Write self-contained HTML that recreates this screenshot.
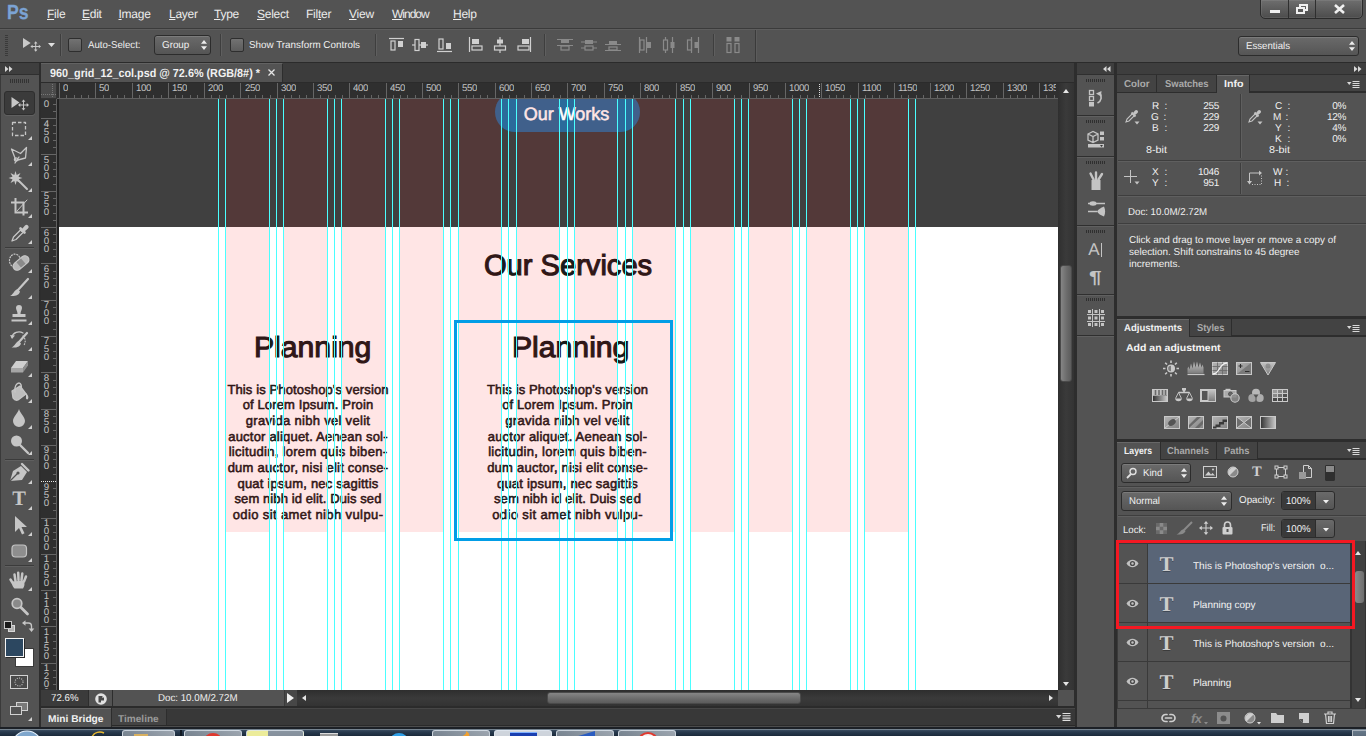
<!DOCTYPE html><html><head><meta charset="utf-8"><title>Photoshop</title><style>
html,body{margin:0;padding:0}
body{width:1366px;height:736px;overflow:hidden;background:#535353;position:relative;text-rendering:geometricPrecision;font-family:"Liberation Sans",sans-serif;font-size:11px;color:#ececec}
div{position:absolute;box-sizing:border-box}
.t{white-space:nowrap;line-height:1}
svg{position:absolute;overflow:visible}
u{text-decoration:underline;text-underline-offset:1px}
.dd{background:linear-gradient(#6a6a6a,#555);border:1px solid #2c2c2c;border-radius:3px;box-shadow:inset 0 1px 0 rgba(255,255,255,.12)}
.tab{background:#535353;border-right:1px solid #2d2d2d;color:#ececec;font-weight:bold}
.itab{background:#434343;border-right:1px solid #2d2d2d;color:#a6a6a6;font-weight:bold}
</style></head><body>
<div style="left:0px;top:0px;width:1366px;height:28px;background:#535353"></div>
<div class="t" style="left:7px;top:2.5px;font-size:20.5px;font-weight:bold;color:#7ba3d4;-webkit-text-stroke:0.3px #7ba3d4;transform:scaleX(.86);transform-origin:0 0">Ps</div>
<div class="t" style="left:47px;top:8px;font-size:12px;color:#ececec;letter-spacing:-0.25px"><u>F</u>ile</div>
<div class="t" style="left:82px;top:8px;font-size:12px;color:#ececec;letter-spacing:-0.25px"><u>E</u>dit</div>
<div class="t" style="left:118.5px;top:8px;font-size:12px;color:#ececec;letter-spacing:-0.25px"><u>I</u>mage</div>
<div class="t" style="left:169px;top:8px;font-size:12px;color:#ececec;letter-spacing:-0.25px"><u>L</u>ayer</div>
<div class="t" style="left:214px;top:8px;font-size:12px;color:#ececec;letter-spacing:-0.25px"><u>T</u>ype</div>
<div class="t" style="left:257px;top:8px;font-size:12px;color:#ececec;letter-spacing:-0.25px"><u>S</u>elect</div>
<div class="t" style="left:306px;top:8px;font-size:12px;color:#ececec;letter-spacing:-0.25px">Fil<u>t</u>er</div>
<div class="t" style="left:349px;top:8px;font-size:12px;color:#ececec;letter-spacing:-0.25px"><u>V</u>iew</div>
<div class="t" style="left:392px;top:8px;font-size:12px;color:#ececec;letter-spacing:-1.0px"><u>W</u>indow</div>
<div class="t" style="left:453px;top:8px;font-size:12px;color:#ececec;letter-spacing:-0.25px"><u>H</u>elp</div>
<div style="left:1260px;top:-1px;width:103px;height:20px;background:linear-gradient(#6e6e6e,#4c4c4c);border:1px solid #2b2b2b;border-radius:0 0 5px 5px;box-shadow:inset 0 0 0 1px rgba(255,255,255,.08)"></div>
<div style="left:1288px;top:0px;width:1px;height:18px;background:#2f2f2f"></div>
<div style="left:1315px;top:0px;width:1px;height:18px;background:#2f2f2f"></div>
<div style="left:1270px;top:10px;width:10px;height:3px;background:#f0f0f0"></div>
<div style="left:1299px;top:4px;width:9px;height:7px;border:2px solid #f0f0f0"></div>
<div style="left:1296px;top:7px;width:9px;height:7px;border:2px solid #f0f0f0;background:#5a5a5a"></div>
<svg style="left:1334px;top:4px" width="11" height="10" viewBox="0 0 11 10"><path d="M1 1 L10 9 M10 1 L1 9" stroke="#f0f0f0" stroke-width="2.6"/></svg>
<div style="left:0px;top:28px;width:1366px;height:1px;background:#3b3b3b"></div>
<div style="left:0px;top:29px;width:1366px;height:1px;background:#5e5e5e"></div>
<div style="left:0px;top:30px;width:1366px;height:32px;background:#535353"></div>
<div style="left:0px;top:62px;width:1366px;height:1px;background:#2b2b2b"></div>
<div style="left:5px;top:35px;width:3px;height:21px;background:repeating-linear-gradient(#3a3a3a 0 1px,#535353 1px 2px)"></div>
<svg style="left:23px;top:37px" width="18" height="17" viewBox="0 0 18 17"><path d="M0 1 L0 11 L7.700 6 Z" fill="#c9c9c9"/><path d="M12.700 5.500 v8 M8.700 9.500 h8" stroke="#c9c9c9" stroke-width="1" fill="none"/><path d="M12.700 4.200 l-1.800 2.200 h3.600 z M12.700 14.800 l-1.800 -2.200 h3.600 z M7.400 9.500 l2.200 -1.800 v3.600 z M18 9.500 l-2.200 -1.800 v3.600 z" fill="#c9c9c9"/></svg>
<svg style="left:48px;top:43px" width="7" height="4"><path d="M0 0 h7 l-3.500 4 z" fill="#e0e0e0"/></svg>
<div style="left:60px;top:34px;width:1px;height:22px;background:#3e3e3e"></div>
<div style="left:61px;top:34px;width:1px;height:22px;background:#5f5f5f"></div>
<div style="left:68px;top:38px;width:14px;height:14px;background:linear-gradient(#727272,#5c5c5c);border:1px solid #2e2e2e;border-radius:2px"></div>
<div class="t" style="left:87.5px;top:41.1px;font-size:10px;color:#f0f0f0;transform:scaleX(0.9638);transform-origin:0 0;">Auto-Select:</div>
<div class="dd" style="left:154px;top:35px;width:57px;height:20px;"></div>
<div class="t" style="left:162px;top:41.1px;font-size:10px;color:#f0f0f0;transform:scaleX(0.9823);transform-origin:0 0;">Group</div>
<svg style="left:200.500px;top:40px" width="6" height="10"><path d="M0 3.700 l3 -3.700 l3 3.700 z M0 6.300 l3 3.700 l3 -3.700 z" fill="#ececec"/></svg>
<div style="left:220px;top:34px;width:1px;height:22px;background:#3e3e3e"></div>
<div style="left:221px;top:34px;width:1px;height:22px;background:#5f5f5f"></div>
<div style="left:230px;top:38px;width:14px;height:14px;background:linear-gradient(#727272,#5c5c5c);border:1px solid #2e2e2e;border-radius:2px"></div>
<div class="t" style="left:249px;top:41.1px;font-size:10px;color:#f0f0f0;transform:scaleX(0.9839);transform-origin:0 0;">Show Transform Controls</div>
<div style="left:375px;top:34px;width:1px;height:22px;background:#3e3e3e"></div>
<div style="left:376px;top:34px;width:1px;height:22px;background:#5f5f5f"></div>
<svg style="left:389px;top:37px" width="16" height="16" viewBox="0 0 16 16" fill="none" stroke="#d0d0d0" stroke-width="1.2"><path d="M0 1.5 h15"/><rect x="2" y="4" width="4" height="9"/><rect x="9" y="4" width="5" height="6" fill="#d0d0d0" stroke="none"/></svg>
<svg style="left:412px;top:37px" width="16" height="16" viewBox="0 0 16 16" fill="none" stroke="#d0d0d0" stroke-width="1.2"><path d="M0 8 h16"/><rect x="3" y="2.500" width="4" height="11" fill="#535353"/><rect x="9" y="5" width="5" height="6" fill="#d0d0d0" stroke="none"/></svg>
<svg style="left:437px;top:37px" width="16" height="16" viewBox="0 0 16 16" fill="none" stroke="#d0d0d0" stroke-width="1.2"><path d="M0 14.5 h15"/><rect x="2" y="2" width="4" height="10"/><rect x="9" y="6" width="5" height="6" fill="#d0d0d0" stroke="none"/></svg>
<svg style="left:468px;top:37px" width="16" height="16" viewBox="0 0 16 16" fill="none" stroke="#d0d0d0" stroke-width="1.2"><path d="M1.5 0 v15"/><rect x="4" y="2" width="7" height="5" fill="#d0d0d0" stroke="none"/><rect x="4" y="9" width="10" height="4"/></svg>
<svg style="left:492px;top:37px" width="16" height="16" viewBox="0 0 16 16" fill="none" stroke="#d0d0d0" stroke-width="1.2"><path d="M8 0 v16"/><rect x="5" y="2.500" width="6" height="4" fill="#d0d0d0" stroke="none"/><rect x="2.500" y="9" width="11" height="4" fill="#535353"/></svg>
<svg style="left:516px;top:37px" width="16" height="16" viewBox="0 0 16 16" fill="none" stroke="#d0d0d0" stroke-width="1.2"><path d="M14.5 0 v15"/><rect x="6" y="2" width="7" height="5" fill="#d0d0d0" stroke="none"/><rect x="2" y="9" width="11" height="4"/></svg>
<div style="left:544px;top:34px;width:1px;height:22px;background:#3e3e3e"></div>
<div style="left:545px;top:34px;width:1px;height:22px;background:#5f5f5f"></div>
<svg style="left:557px;top:37px" width="16" height="16" viewBox="0 0 16 16" fill="none" stroke="#8a8a8a" stroke-width="1.2"><path d="M0 2.500 h16 M0 8.500 h16"/><rect x="4" y="3" width="8" height="3" fill="#8a8a8a" stroke="none"/><rect x="4" y="9" width="8" height="4"/></svg>
<svg style="left:581px;top:37px" width="16" height="16" viewBox="0 0 16 16" fill="none" stroke="#8a8a8a" stroke-width="1.2"><path d="M0 5 h16 M0 11 h16"/><rect x="4" y="3" width="8" height="4" fill="#8a8a8a" stroke="none"/><rect x="4" y="9" width="8" height="4" fill="#535353"/></svg>
<svg style="left:605px;top:37px" width="16" height="16" viewBox="0 0 16 16" fill="none" stroke="#8a8a8a" stroke-width="1.2"><path d="M0 7.500 h16 M0 13.500 h16"/><rect x="4" y="4" width="8" height="3" fill="#8a8a8a" stroke="none"/><rect x="4" y="10" width="8" height="3"/></svg>
<svg style="left:637px;top:37px" width="16" height="16" viewBox="0 0 16 16" fill="none" stroke="#8a8a8a" stroke-width="1.2"><path d="M2.500 0 v16 M9.500 0 v16"/><rect x="3" y="3" width="4" height="10"/><rect x="10" y="5" width="4" height="6" fill="#8a8a8a" stroke="none"/></svg>
<svg style="left:661px;top:37px" width="16" height="16" viewBox="0 0 16 16" fill="none" stroke="#8a8a8a" stroke-width="1.2"><path d="M4.500 0 v16 M11.500 0 v16"/><rect x="2.500" y="3" width="4" height="10" fill="#535353"/><rect x="9.500" y="5" width="4" height="6" fill="#8a8a8a" stroke="none"/></svg>
<svg style="left:685px;top:37px" width="16" height="16" viewBox="0 0 16 16" fill="none" stroke="#8a8a8a" stroke-width="1.2"><path d="M6.500 0 v16 M13.500 0 v16"/><rect x="2.500" y="3" width="4" height="10"/><rect x="9.500" y="5" width="4" height="6" fill="#8a8a8a" stroke="none"/></svg>
<div style="left:713px;top:34px;width:1px;height:22px;background:#3e3e3e"></div>
<div style="left:714px;top:34px;width:1px;height:22px;background:#5f5f5f"></div>
<svg style="left:725px;top:37px" width="16" height="16" viewBox="0 0 16 16" fill="none" stroke="#8a8a8a" stroke-width="1.2"><rect x="2" y="6.500" width="4" height="9"/><rect x="10" y="6.500" width="4" height="9"/><rect x="1.500" y="0" width="5" height="4.500" fill="#8a8a8a" stroke="none"/><rect x="9.500" y="0" width="5" height="4.500" fill="#8a8a8a" stroke="none"/></svg>
<div style="left:755px;top:30px;width:1px;height:32px;background:#3a3a3a"></div>
<div style="left:756px;top:30px;width:1px;height:32px;background:#5c5c5c"></div>
<div class="dd" style="left:1238px;top:36px;width:121px;height:20px;"></div>
<div class="t" style="left:1246px;top:41.6px;font-size:10px;color:#f0f0f0;transform:scaleX(0.9654);transform-origin:0 0;">Essentials</div>
<svg style="left:1349px;top:41px" width="6" height="11"><path d="M0 3.700 l3 -3.700 l3 3.700 z M0 6.300 l3 3.700 l3 -3.700 z" fill="#ececec"/></svg>
<div style="left:0px;top:63px;width:1366px;height:20px;background:#3c3c3c"></div>
<div style="left:39px;top:63px;width:2px;height:664px;background:#2d2d2d"></div>
<div style="left:41px;top:63px;width:242px;height:19px;background:#535353;border-top:1px solid #626262;border-right:1px solid #2d2d2d"></div>
<div class="t" style="left:50.3px;top:67.6px;font-size:11.8px;font-weight:bold;color:#f0f0f0;transform:scaleX(0.916);transform-origin:0 0;">960_grid_12_col.psd @ 72.6% (RGB/8#) *</div>
<svg style="left:268px;top:69px" width="7" height="7"><path d="M0.500 .5 L6.500 6.500 M6.500 .5 L.5 6.500" stroke="#e6e6e6" stroke-width="1.3"/></svg>
<div style="left:41px;top:82px;width:1034px;height:1px;background:#2b2b2b"></div>
<div style="left:41px;top:83px;width:1017px;height:16px;background:#2f2f2f;border-bottom:1px solid #606060"></div>
<div style="left:41px;top:83px;width:16px;height:16px;background:#4b4b4b;border-right:1px solid #333;border-bottom:1px solid #333"></div>
<div style="left:41px;top:94px;width:15px;height:1px;background:repeating-linear-gradient(90deg,#777 0 1px,transparent 1px 2px)"></div>
<div style="left:52px;top:84px;width:1px;height:14px;background:repeating-linear-gradient(#777 0 1px,transparent 1px 2px)"></div>
<svg style="left:57px;top:83px" width="1001" height="15" viewBox="57 83 1001 15"><g stroke="#666" stroke-width="1" shape-rendering="crispEdges"><path d="M59.5 83 v15"/><path d="M66.5 95 v3"/><path d="M74.5 95 v3"/><path d="M81.5 95 v3"/><path d="M88.5 95 v3"/><path d="M95.5 83 v15"/><path d="M103.5 95 v3"/><path d="M110.5 95 v3"/><path d="M117.5 95 v3"/><path d="M124.5 95 v3"/><path d="M132.5 83 v15"/><path d="M139.5 95 v3"/><path d="M146.5 95 v3"/><path d="M153.5 95 v3"/><path d="M161.5 95 v3"/><path d="M168.5 83 v15"/><path d="M175.5 95 v3"/><path d="M182.5 95 v3"/><path d="M190.5 95 v3"/><path d="M197.5 95 v3"/><path d="M204.5 83 v15"/><path d="M211.5 95 v3"/><path d="M219.5 95 v3"/><path d="M226.5 95 v3"/><path d="M233.5 95 v3"/><path d="M240.5 83 v15"/><path d="M248.5 95 v3"/><path d="M255.5 95 v3"/><path d="M262.5 95 v3"/><path d="M270.5 95 v3"/><path d="M277.5 83 v15"/><path d="M284.5 95 v3"/><path d="M291.5 95 v3"/><path d="M299.5 95 v3"/><path d="M306.5 95 v3"/><path d="M313.5 83 v15"/><path d="M320.5 95 v3"/><path d="M328.5 95 v3"/><path d="M335.5 95 v3"/><path d="M342.5 95 v3"/><path d="M349.5 83 v15"/><path d="M357.5 95 v3"/><path d="M364.5 95 v3"/><path d="M371.5 95 v3"/><path d="M378.5 95 v3"/><path d="M386.5 83 v15"/><path d="M393.5 95 v3"/><path d="M400.5 95 v3"/><path d="M407.5 95 v3"/><path d="M415.5 95 v3"/><path d="M422.5 83 v15"/><path d="M429.5 95 v3"/><path d="M437.5 95 v3"/><path d="M444.5 95 v3"/><path d="M451.5 95 v3"/><path d="M458.5 83 v15"/><path d="M466.5 95 v3"/><path d="M473.5 95 v3"/><path d="M480.5 95 v3"/><path d="M487.5 95 v3"/><path d="M495.5 83 v15"/><path d="M502.5 95 v3"/><path d="M509.5 95 v3"/><path d="M516.5 95 v3"/><path d="M524.5 95 v3"/><path d="M531.5 83 v15"/><path d="M538.5 95 v3"/><path d="M545.5 95 v3"/><path d="M553.5 95 v3"/><path d="M560.5 95 v3"/><path d="M567.5 83 v15"/><path d="M574.5 95 v3"/><path d="M582.5 95 v3"/><path d="M589.5 95 v3"/><path d="M596.5 95 v3"/><path d="M604.5 83 v15"/><path d="M611.5 95 v3"/><path d="M618.5 95 v3"/><path d="M625.5 95 v3"/><path d="M633.5 95 v3"/><path d="M640.5 83 v15"/><path d="M647.5 95 v3"/><path d="M654.5 95 v3"/><path d="M662.5 95 v3"/><path d="M669.5 95 v3"/><path d="M676.5 83 v15"/><path d="M683.5 95 v3"/><path d="M691.5 95 v3"/><path d="M698.5 95 v3"/><path d="M705.5 95 v3"/><path d="M712.5 83 v15"/><path d="M720.5 95 v3"/><path d="M727.5 95 v3"/><path d="M734.5 95 v3"/><path d="M741.5 95 v3"/><path d="M749.5 83 v15"/><path d="M756.5 95 v3"/><path d="M763.5 95 v3"/><path d="M770.5 95 v3"/><path d="M778.5 95 v3"/><path d="M785.5 83 v15"/><path d="M792.5 95 v3"/><path d="M800.5 95 v3"/><path d="M807.5 95 v3"/><path d="M814.5 95 v3"/><path d="M821.5 83 v15"/><path d="M829.5 95 v3"/><path d="M836.5 95 v3"/><path d="M843.5 95 v3"/><path d="M850.5 95 v3"/><path d="M858.5 83 v15"/><path d="M865.5 95 v3"/><path d="M872.5 95 v3"/><path d="M879.5 95 v3"/><path d="M887.5 95 v3"/><path d="M894.5 83 v15"/><path d="M901.5 95 v3"/><path d="M908.5 95 v3"/><path d="M916.5 95 v3"/><path d="M923.5 95 v3"/><path d="M930.5 83 v15"/><path d="M937.5 95 v3"/><path d="M945.5 95 v3"/><path d="M952.5 95 v3"/><path d="M959.5 95 v3"/><path d="M966.5 83 v15"/><path d="M974.5 95 v3"/><path d="M981.5 95 v3"/><path d="M988.5 95 v3"/><path d="M996.5 95 v3"/><path d="M1003.5 83 v15"/><path d="M1010.5 95 v3"/><path d="M1017.5 95 v3"/><path d="M1025.5 95 v3"/><path d="M1032.5 95 v3"/><path d="M1039.5 83 v15"/><path d="M1046.5 95 v3"/><path d="M1054.5 95 v3"/></g></svg>
<div class="t" style="left:63px;top:84.3px;font-size:9.7px;color:#c2c2c2;letter-spacing:-0.4px;max-width:993px;overflow:hidden">0</div>
<div class="t" style="left:99px;top:84.3px;font-size:9.7px;color:#c2c2c2;letter-spacing:-0.4px;max-width:957px;overflow:hidden">50</div>
<div class="t" style="left:136px;top:84.3px;font-size:9.7px;color:#c2c2c2;letter-spacing:-0.4px;max-width:921px;overflow:hidden">100</div>
<div class="t" style="left:172px;top:84.3px;font-size:9.7px;color:#c2c2c2;letter-spacing:-0.4px;max-width:885px;overflow:hidden">150</div>
<div class="t" style="left:208px;top:84.3px;font-size:9.7px;color:#c2c2c2;letter-spacing:-0.4px;max-width:848px;overflow:hidden">200</div>
<div class="t" style="left:245px;top:84.3px;font-size:9.7px;color:#c2c2c2;letter-spacing:-0.4px;max-width:812px;overflow:hidden">250</div>
<div class="t" style="left:281px;top:84.3px;font-size:9.7px;color:#c2c2c2;letter-spacing:-0.4px;max-width:776px;overflow:hidden">300</div>
<div class="t" style="left:317px;top:84.3px;font-size:9.7px;color:#c2c2c2;letter-spacing:-0.4px;max-width:739px;overflow:hidden">350</div>
<div class="t" style="left:353px;top:84.3px;font-size:9.7px;color:#c2c2c2;letter-spacing:-0.4px;max-width:703px;overflow:hidden">400</div>
<div class="t" style="left:390px;top:84.3px;font-size:9.7px;color:#c2c2c2;letter-spacing:-0.4px;max-width:667px;overflow:hidden">450</div>
<div class="t" style="left:426px;top:84.3px;font-size:9.7px;color:#c2c2c2;letter-spacing:-0.4px;max-width:631px;overflow:hidden">500</div>
<div class="t" style="left:462px;top:84.3px;font-size:9.7px;color:#c2c2c2;letter-spacing:-0.4px;max-width:594px;overflow:hidden">550</div>
<div class="t" style="left:499px;top:84.3px;font-size:9.7px;color:#c2c2c2;letter-spacing:-0.4px;max-width:558px;overflow:hidden">600</div>
<div class="t" style="left:535px;top:84.3px;font-size:9.7px;color:#c2c2c2;letter-spacing:-0.4px;max-width:522px;overflow:hidden">650</div>
<div class="t" style="left:571px;top:84.3px;font-size:9.7px;color:#c2c2c2;letter-spacing:-0.4px;max-width:485px;overflow:hidden">700</div>
<div class="t" style="left:608px;top:84.3px;font-size:9.7px;color:#c2c2c2;letter-spacing:-0.4px;max-width:449px;overflow:hidden">750</div>
<div class="t" style="left:644px;top:84.3px;font-size:9.7px;color:#c2c2c2;letter-spacing:-0.4px;max-width:413px;overflow:hidden">800</div>
<div class="t" style="left:680px;top:84.3px;font-size:9.7px;color:#c2c2c2;letter-spacing:-0.4px;max-width:376px;overflow:hidden">850</div>
<div class="t" style="left:716px;top:84.3px;font-size:9.7px;color:#c2c2c2;letter-spacing:-0.4px;max-width:340px;overflow:hidden">900</div>
<div class="t" style="left:753px;top:84.3px;font-size:9.7px;color:#c2c2c2;letter-spacing:-0.4px;max-width:304px;overflow:hidden">950</div>
<div class="t" style="left:789px;top:84.3px;font-size:9.7px;color:#c2c2c2;letter-spacing:-0.4px;max-width:267px;overflow:hidden">1000</div>
<div class="t" style="left:825px;top:84.3px;font-size:9.7px;color:#c2c2c2;letter-spacing:-0.4px;max-width:231px;overflow:hidden">1050</div>
<div class="t" style="left:862px;top:84.3px;font-size:9.7px;color:#c2c2c2;letter-spacing:-0.4px;max-width:195px;overflow:hidden">1100</div>
<div class="t" style="left:898px;top:84.3px;font-size:9.7px;color:#c2c2c2;letter-spacing:-0.4px;max-width:159px;overflow:hidden">1150</div>
<div class="t" style="left:934px;top:84.3px;font-size:9.7px;color:#c2c2c2;letter-spacing:-0.4px;max-width:122px;overflow:hidden">1200</div>
<div class="t" style="left:970px;top:84.3px;font-size:9.7px;color:#c2c2c2;letter-spacing:-0.4px;max-width:86px;overflow:hidden">1250</div>
<div class="t" style="left:1007px;top:84.3px;font-size:9.7px;color:#c2c2c2;letter-spacing:-0.4px;max-width:50px;overflow:hidden">1300</div>
<div class="t" style="left:1043px;top:84.3px;font-size:9.7px;color:#c2c2c2;letter-spacing:-0.4px;max-width:13px;overflow:hidden">1350</div>
<div style="left:819px;top:84px;width:1px;height:14px;background:repeating-linear-gradient(#ddd 0 1px,transparent 1px 2px)"></div>
<div style="left:41px;top:99px;width:16px;height:591px;background:#2f2f2f;border-right:1px solid #606060"></div>
<svg style="left:41px;top:99px" width="16" height="591" viewBox="41 99 16 591"><g stroke="#666" stroke-width="1" shape-rendering="crispEdges"><path d="M53 104.5 h3"/><path d="M53 111.5 h3"/><path d="M41 118.5 h15"/><path d="M53 125.5 h3"/><path d="M53 133.5 h3"/><path d="M53 140.5 h3"/><path d="M53 147.5 h3"/><path d="M41 154.5 h15"/><path d="M53 162.5 h3"/><path d="M53 169.5 h3"/><path d="M53 176.5 h3"/><path d="M53 184.5 h3"/><path d="M41 191.5 h15"/><path d="M53 198.5 h3"/><path d="M53 205.5 h3"/><path d="M53 213.5 h3"/><path d="M53 220.5 h3"/><path d="M41 227.5 h15"/><path d="M53 234.5 h3"/><path d="M53 242.5 h3"/><path d="M53 249.5 h3"/><path d="M53 256.5 h3"/><path d="M41 263.5 h15"/><path d="M53 271.5 h3"/><path d="M53 278.5 h3"/><path d="M53 285.5 h3"/><path d="M53 292.5 h3"/><path d="M41 300.5 h15"/><path d="M53 307.5 h3"/><path d="M53 314.5 h3"/><path d="M53 321.5 h3"/><path d="M53 329.5 h3"/><path d="M41 336.5 h15"/><path d="M53 343.5 h3"/><path d="M53 351.5 h3"/><path d="M53 358.5 h3"/><path d="M53 365.5 h3"/><path d="M41 372.5 h15"/><path d="M53 380.5 h3"/><path d="M53 387.5 h3"/><path d="M53 394.5 h3"/><path d="M53 401.5 h3"/><path d="M41 409.5 h15"/><path d="M53 416.5 h3"/><path d="M53 423.5 h3"/><path d="M53 430.5 h3"/><path d="M53 438.5 h3"/><path d="M41 445.5 h15"/><path d="M53 452.5 h3"/><path d="M53 459.5 h3"/><path d="M53 467.5 h3"/><path d="M53 474.5 h3"/><path d="M41 481.5 h15"/><path d="M53 488.5 h3"/><path d="M53 496.5 h3"/><path d="M53 503.5 h3"/><path d="M53 510.5 h3"/><path d="M41 518.5 h15"/><path d="M53 525.5 h3"/><path d="M53 532.5 h3"/><path d="M53 539.5 h3"/><path d="M53 547.5 h3"/><path d="M41 554.5 h15"/><path d="M53 561.5 h3"/><path d="M53 568.5 h3"/><path d="M53 576.5 h3"/><path d="M53 583.5 h3"/><path d="M41 590.5 h15"/><path d="M53 597.5 h3"/><path d="M53 605.5 h3"/><path d="M53 612.5 h3"/><path d="M53 619.5 h3"/><path d="M41 626.5 h15"/><path d="M53 634.5 h3"/><path d="M53 641.5 h3"/><path d="M53 648.5 h3"/><path d="M53 655.5 h3"/><path d="M41 663.5 h15"/><path d="M53 670.5 h3"/><path d="M53 677.5 h3"/><path d="M53 684.5 h3"/></g></svg>
<div style="left:42px;top:97.5px;padding-top:3px;width:9px;text-align:center;font-size:9.7px;line-height:8px;color:#c2c2c2;height:591.5px;overflow:hidden">0</div>
<div style="left:42px;top:118px;padding-top:3px;width:9px;text-align:center;font-size:9.7px;line-height:8px;color:#c2c2c2;height:571px;overflow:hidden">4<br>5<br>0</div>
<div style="left:42px;top:154px;padding-top:3px;width:9px;text-align:center;font-size:9.7px;line-height:8px;color:#c2c2c2;height:535px;overflow:hidden">5<br>0<br>0</div>
<div style="left:42px;top:190px;padding-top:3px;width:9px;text-align:center;font-size:9.7px;line-height:8px;color:#c2c2c2;height:499px;overflow:hidden">5<br>5<br>0</div>
<div style="left:42px;top:227px;padding-top:3px;width:9px;text-align:center;font-size:9.7px;line-height:8px;color:#c2c2c2;height:462px;overflow:hidden">6<br>0<br>0</div>
<div style="left:42px;top:263px;padding-top:3px;width:9px;text-align:center;font-size:9.7px;line-height:8px;color:#c2c2c2;height:426px;overflow:hidden">6<br>5<br>0</div>
<div style="left:42px;top:299px;padding-top:3px;width:9px;text-align:center;font-size:9.7px;line-height:8px;color:#c2c2c2;height:390px;overflow:hidden">7<br>0<br>0</div>
<div style="left:42px;top:335px;padding-top:3px;width:9px;text-align:center;font-size:9.7px;line-height:8px;color:#c2c2c2;height:354px;overflow:hidden">7<br>5<br>0</div>
<div style="left:42px;top:372px;padding-top:3px;width:9px;text-align:center;font-size:9.7px;line-height:8px;color:#c2c2c2;height:317px;overflow:hidden">8<br>0<br>0</div>
<div style="left:42px;top:408px;padding-top:3px;width:9px;text-align:center;font-size:9.7px;line-height:8px;color:#c2c2c2;height:281px;overflow:hidden">8<br>5<br>0</div>
<div style="left:42px;top:444px;padding-top:3px;width:9px;text-align:center;font-size:9.7px;line-height:8px;color:#c2c2c2;height:245px;overflow:hidden">9<br>0<br>0</div>
<div style="left:42px;top:481px;padding-top:3px;width:9px;text-align:center;font-size:9.7px;line-height:8px;color:#c2c2c2;height:208px;overflow:hidden">9<br>5<br>0</div>
<div style="left:42px;top:517px;padding-top:3px;width:9px;text-align:center;font-size:9.7px;line-height:8px;color:#c2c2c2;height:172px;overflow:hidden">1<br>0<br>0<br>0</div>
<div style="left:42px;top:553px;padding-top:3px;width:9px;text-align:center;font-size:9.7px;line-height:8px;color:#c2c2c2;height:136px;overflow:hidden">1<br>0<br>5<br>0</div>
<div style="left:42px;top:590px;padding-top:3px;width:9px;text-align:center;font-size:9.7px;line-height:8px;color:#c2c2c2;height:99px;overflow:hidden">1<br>1<br>0<br>0</div>
<div style="left:42px;top:626px;padding-top:3px;width:9px;text-align:center;font-size:9.7px;line-height:8px;color:#c2c2c2;height:63px;overflow:hidden">1<br>1<br>5<br>0</div>
<div style="left:42px;top:662px;padding-top:3px;width:9px;text-align:center;font-size:9.7px;line-height:8px;color:#c2c2c2;height:27px;overflow:hidden">1<br>2<br>0<br>0</div>
<div style="left:41px;top:481px;width:15px;height:1px;background:repeating-linear-gradient(90deg,#e6e6e6 0 1px,#2f2f2f 1px 2px)"></div>
<div style="left:57px;top:99px;width:1001px;height:591px;overflow:hidden;background:#fff;border-left:1px solid #222">
<div style="left:0px;top:0px;width:1000px;height:128px;background:#404040"></div>
<div style="left:0px;top:0px;width:1px;height:591px;background:#222"></div>
<div style="left:437px;top:-7px;width:145px;height:39.8px;background:#2b6b9b;border-radius:19.900px"></div>
<div class="t" style="left:436px;top:6px;width:145px;text-align:center;font-size:18px;color:#fff;-webkit-text-stroke:0.55px #fff"><span id="ow" style="display:inline-block;transform:scaleX(1)">Our Works</span></div>
<div class="t" id="os" style="left:425.5px;top:153px;font-size:29px;color:#181a1a;-webkit-text-stroke:1.1px #181a1a;transform:scaleX(1.003);transform-origin:0 0">Our Services</div>
<div class="t" id="pl1" style="left:195.5px;top:234.5px;font-size:29px;color:#181a1a;-webkit-text-stroke:1.1px #181a1a;transform:scaleX(1.04);transform-origin:0 0">Planning</div>
<div class="t" id="pl2" style="left:454.20000000000005px;top:234.5px;font-size:29px;color:#181a1a;-webkit-text-stroke:1.1px #181a1a;transform:scaleX(1.04);transform-origin:0 0">Planning</div>
<div id="bd0" style="left:150px;top:282.8px;width:200px;text-align:center;font-size:13px;line-height:15.62px;color:#181a1a;-webkit-text-stroke:0.55px #181a1a;white-space:nowrap"><span style="letter-spacing:0.125px">This is Photoshop's version</span><br><span style="letter-spacing:0.134px">of Lorem Ipsum. Proin</span><br><span style="letter-spacing:0.305px">gravida nibh vel velit</span><br><span style="letter-spacing:0.206px">auctor aliquet. Aenean sol-</span><br><span style="letter-spacing:0.3px">licitudin, lorem quis biben-</span><br><span style="letter-spacing:0.243px">dum auctor, nisi elit conse-</span><br><span style="letter-spacing:0.215px">quat ipsum, nec sagittis</span><br><span style="letter-spacing:0.096px">sem nibh id elit. Duis sed</span><br><span style="letter-spacing:0.392px">odio sit amet nibh vulpu-</span></div>
<div id="bd1" style="left:409.5px;top:282.8px;width:200px;text-align:center;font-size:13px;line-height:15.62px;color:#181a1a;-webkit-text-stroke:0.55px #181a1a;white-space:nowrap"><span style="letter-spacing:0.125px">This is Photoshop's version</span><br><span style="letter-spacing:0.134px">of Lorem Ipsum. Proin</span><br><span style="letter-spacing:0.305px">gravida nibh vel velit</span><br><span style="letter-spacing:0.206px">auctor aliquet. Aenean sol-</span><br><span style="letter-spacing:0.3px">licitudin, lorem quis biben-</span><br><span style="letter-spacing:0.243px">dum auctor, nisi elit conse-</span><br><span style="letter-spacing:0.215px">quat ipsum, nec sagittis</span><br><span style="letter-spacing:0.096px">sem nibh id elit. Duis sed</span><br><span style="letter-spacing:0.392px">odio sit amet nibh vulpu-</span></div>
<div style="left:168px;top:0px;width:43px;height:433px;background:rgba(255,0,0,.1)"></div>
<div style="left:226px;top:0px;width:43px;height:433px;background:rgba(255,0,0,.1)"></div>
<div style="left:284px;top:0px;width:43px;height:433px;background:rgba(255,0,0,.1)"></div>
<div style="left:342px;top:0px;width:43px;height:433px;background:rgba(255,0,0,.1)"></div>
<div style="left:401px;top:0px;width:42px;height:433px;background:rgba(255,0,0,.1)"></div>
<div style="left:459px;top:0px;width:42px;height:433px;background:rgba(255,0,0,.1)"></div>
<div style="left:517px;top:0px;width:42px;height:433px;background:rgba(255,0,0,.1)"></div>
<div style="left:575px;top:0px;width:42px;height:433px;background:rgba(255,0,0,.1)"></div>
<div style="left:633px;top:0px;width:43px;height:433px;background:rgba(255,0,0,.1)"></div>
<div style="left:691px;top:0px;width:43px;height:433px;background:rgba(255,0,0,.1)"></div>
<div style="left:749px;top:0px;width:43px;height:433px;background:rgba(255,0,0,.1)"></div>
<div style="left:807px;top:0px;width:43px;height:433px;background:rgba(255,0,0,.1)"></div>
<div style="left:160px;top:0px;width:1px;height:591px;background:#4affff"></div>
<div style="left:167px;top:0px;width:1px;height:591px;background:#4affff"></div>
<div style="left:211px;top:0px;width:1px;height:591px;background:#4affff"></div>
<div style="left:218px;top:0px;width:1px;height:591px;background:#4affff"></div>
<div style="left:225px;top:0px;width:1px;height:591px;background:#4affff"></div>
<div style="left:269px;top:0px;width:1px;height:591px;background:#4affff"></div>
<div style="left:276px;top:0px;width:1px;height:591px;background:#4affff"></div>
<div style="left:283px;top:0px;width:1px;height:591px;background:#4affff"></div>
<div style="left:327px;top:0px;width:1px;height:591px;background:#4affff"></div>
<div style="left:334px;top:0px;width:1px;height:591px;background:#4affff"></div>
<div style="left:341px;top:0px;width:1px;height:591px;background:#4affff"></div>
<div style="left:385px;top:0px;width:1px;height:591px;background:#4affff"></div>
<div style="left:392px;top:0px;width:1px;height:591px;background:#4affff"></div>
<div style="left:400px;top:0px;width:1px;height:591px;background:#4affff"></div>
<div style="left:443px;top:0px;width:1px;height:591px;background:#4affff"></div>
<div style="left:450px;top:0px;width:1px;height:591px;background:#4affff"></div>
<div style="left:458px;top:0px;width:1px;height:591px;background:#4affff"></div>
<div style="left:501px;top:0px;width:1px;height:591px;background:#4affff"></div>
<div style="left:509px;top:0px;width:1px;height:591px;background:#4affff"></div>
<div style="left:516px;top:0px;width:1px;height:591px;background:#4affff"></div>
<div style="left:559px;top:0px;width:1px;height:591px;background:#4affff"></div>
<div style="left:567px;top:0px;width:1px;height:591px;background:#4affff"></div>
<div style="left:574px;top:0px;width:1px;height:591px;background:#4affff"></div>
<div style="left:617px;top:0px;width:1px;height:591px;background:#4affff"></div>
<div style="left:625px;top:0px;width:1px;height:591px;background:#4affff"></div>
<div style="left:632px;top:0px;width:1px;height:591px;background:#4affff"></div>
<div style="left:676px;top:0px;width:1px;height:591px;background:#4affff"></div>
<div style="left:683px;top:0px;width:1px;height:591px;background:#4affff"></div>
<div style="left:690px;top:0px;width:1px;height:591px;background:#4affff"></div>
<div style="left:734px;top:0px;width:1px;height:591px;background:#4affff"></div>
<div style="left:741px;top:0px;width:1px;height:591px;background:#4affff"></div>
<div style="left:748px;top:0px;width:1px;height:591px;background:#4affff"></div>
<div style="left:792px;top:0px;width:1px;height:591px;background:#4affff"></div>
<div style="left:799px;top:0px;width:1px;height:591px;background:#4affff"></div>
<div style="left:806px;top:0px;width:1px;height:591px;background:#4affff"></div>
<div style="left:850px;top:0px;width:1px;height:591px;background:#4affff"></div>
<div style="left:857px;top:0px;width:1px;height:591px;background:#4affff"></div>
<div style="left:396px;top:221px;width:219px;height:221px;border:3px solid #029de6"></div>
</div>
<div style="left:1058px;top:83px;width:16px;height:607px;background:linear-gradient(90deg,#2f2f2f,#3a3a3a 50%,#333)"></div>
<svg style="left:1063px;top:88.500px" width="6" height="4"><path d="M0 4 l3 -4 l3 4 z" fill="#e6e6e6"/></svg>
<svg style="left:1063px;top:681.500px" width="6" height="4"><path d="M0 0 l3 4 l3 -4 z" fill="#e6e6e6"/></svg>
<div style="left:1060px;top:265px;width:12px;height:117px;background:linear-gradient(90deg,#858585,#6a6a6a 60%,#5c5c5c);border-radius:3px;border:1px solid #4a4a4a"></div>
<div style="left:1074px;top:63px;width:3px;height:664px;background:#2d2d2d"></div>
<div style="left:0px;top:63px;width:39px;height:664px;background:#535353;border-left:1px solid #3a3a3a"></div>
<div style="left:0px;top:63px;width:39px;height:12px;background:#3e3e3e;border-bottom:1px solid #2f2f2f"></div>
<svg style="left:5px;top:66px" width="8" height="6"><path d="M0 0 l3.500 3 l-3.500 3 z M4 0 l3.500 3 l-3.500 3 z" fill="#d8d8d8"/></svg>
<div style="left:10px;top:79px;width:19px;height:4px;background:repeating-linear-gradient(90deg,#333 0 1px,transparent 1px 2px)"></div>
<div style="left:4px;top:91px;width:31px;height:24px;background:#3b3b3b;border:1px solid #2e2e2e;border-radius:3px;box-shadow:0 1px 0 rgba(255,255,255,.08)"></div>
<svg style="left:7px;top:90.5px" width="24" height="24" viewBox="0 0 24 24" fill="none" stroke="#c6c6c6" stroke-width="1.3" stroke-linecap="round" stroke-linejoin="round"><path d="M4.500 6 v11 l8 -5.500 z" fill="#c6c6c6" stroke="none"/><path d="M16.500 10 v8 M12.500 14 h8" stroke-width="1"/><path d="M16.500 8.500 l-1.900 2.300 h3.800 z M16.500 19.500 l-1.900 -2.300 h3.800 z M11 14 l2.300 -1.900 v3.800 z M22 14 l-2.300 -1.900 v3.800 z" fill="#c6c6c6" stroke="none"/></svg>
<svg style="left:7px;top:116.5px" width="24" height="24" viewBox="0 0 24 24" fill="none" stroke="#c6c6c6" stroke-width="1.3" stroke-linecap="round" stroke-linejoin="round"><rect x="5.500" y="5.500" width="13" height="13" stroke-dasharray="3.500 2" stroke-linecap="butt"/></svg>
<svg style="left:28px;top:135.5px" width="4" height="4"><path d="M4 0 v4 h-4 z" fill="#d0d0d0"/></svg>
<svg style="left:7px;top:143px" width="24" height="24" viewBox="0 0 24 24" fill="none" stroke="#c6c6c6" stroke-width="1.3" stroke-linecap="round" stroke-linejoin="round"><path d="M4.500 6 l9 4.500 l6 -6 l-1 10.500 l-9.500 2.500 z M8 20 l4 -6"/><circle cx="9" cy="16.500" r="1.600"/></svg>
<svg style="left:28px;top:162px" width="4" height="4"><path d="M4 0 v4 h-4 z" fill="#d0d0d0"/></svg>
<svg style="left:7px;top:169px" width="24" height="24" viewBox="0 0 24 24" fill="none" stroke="#c6c6c6" stroke-width="1.3" stroke-linecap="round" stroke-linejoin="round"><path d="M9 9 L20 20" stroke-width="2"/><path d="M8.500 2 l1.200 4 l3.800 -2 l-2 3.800 l4 1.200 l-4 1.200 l2 3.800 l-3.800 -2 l-1.200 4 l-1.200 -4 l-3.800 2 l2 -3.800 l-4 -1.200 l4 -1.200 l-2 -3.800 l3.800 2 z" fill="#c6c6c6" stroke="none"/></svg>
<svg style="left:28px;top:188px" width="4" height="4"><path d="M4 0 v4 h-4 z" fill="#d0d0d0"/></svg>
<svg style="left:7px;top:195px" width="24" height="24" viewBox="0 0 24 24" fill="none" stroke="#c6c6c6" stroke-width="1.3" stroke-linecap="round" stroke-linejoin="round"><path d="M8.500 3 v14.500 h12.500 M4 7.500 h12.500 v13" stroke-width="2" stroke-linecap="butt" stroke-linejoin="miter"/><path d="M10 16 L20 5" stroke-width="1"/></svg>
<svg style="left:28px;top:214px" width="4" height="4"><path d="M4 0 v4 h-4 z" fill="#d0d0d0"/></svg>
<svg style="left:7px;top:221px" width="24" height="24" viewBox="0 0 24 24" fill="none" stroke="#c6c6c6" stroke-width="1.3" stroke-linecap="round" stroke-linejoin="round"><path d="M5 20 l1.500 -4 l7 -7 l2.500 2.500 l-7 7 z"/><path d="M13.500 7.500 l4 4" stroke-width="2.600"/><path d="M15 8 l3 -3.500 a2 2 0 0 1 3 3 l-3.500 3 z" fill="#c6c6c6" stroke="none"/></svg>
<svg style="left:28px;top:240px" width="4" height="4"><path d="M4 0 v4 h-4 z" fill="#d0d0d0"/></svg>
<div style="left:5px;top:247px;width:29px;height:1px;background:#3b3b3b"></div>
<div style="left:5px;top:248px;width:29px;height:1px;background:#5f5f5f"></div>
<svg style="left:7px;top:249.5px" width="24" height="24" viewBox="0 0 24 24" fill="none" stroke="#c6c6c6" stroke-width="1.3" stroke-linecap="round" stroke-linejoin="round"><g transform="rotate(-40 14 13)"><rect x="5" y="9" width="18" height="8" rx="4" fill="#b8b8b8" stroke="#c6c6c6"/><rect x="11" y="9.500" width="6" height="7" fill="#8a8a8a" stroke="none"/></g><path d="M7 17 a5.500 6.500 0 1 1 6 -9" stroke-dasharray="1 1.800" stroke-width="1.200"/></svg>
<svg style="left:28px;top:268.5px" width="4" height="4"><path d="M4 0 v4 h-4 z" fill="#d0d0d0"/></svg>
<svg style="left:7px;top:276px" width="24" height="24" viewBox="0 0 24 24" fill="none" stroke="#c6c6c6" stroke-width="1.3" stroke-linecap="round" stroke-linejoin="round"><path d="M21 3 L11 14" stroke-width="2.200"/><path d="M10.500 13 l2.500 2.500 c-1 4 -5 5 -10 4.500 c3 -1 3.500 -5 7.500 -7 z" fill="#c6c6c6" stroke="none"/></svg>
<svg style="left:28px;top:295px" width="4" height="4"><path d="M4 0 v4 h-4 z" fill="#d0d0d0"/></svg>
<svg style="left:7px;top:302px" width="24" height="24" viewBox="0 0 24 24" fill="none" stroke="#c6c6c6" stroke-width="1.3" stroke-linecap="round" stroke-linejoin="round"><path d="M12 3 a3 3 0 0 1 3 3 c0 2 -1.500 3 -1.500 6 h5 v3 h-13 v-3 h5 c0 -3 -1.500 -4 -1.500 -6 a3 3 0 0 1 3 -3 z" fill="#c6c6c6" stroke="none"/><path d="M4.500 18.500 h15" stroke-width="2" stroke-linecap="butt"/></svg>
<svg style="left:28px;top:321px" width="4" height="4"><path d="M4 0 v4 h-4 z" fill="#d0d0d0"/></svg>
<svg style="left:7px;top:328px" width="24" height="24" viewBox="0 0 24 24" fill="none" stroke="#c6c6c6" stroke-width="1.3" stroke-linecap="round" stroke-linejoin="round"><path d="M20 5 L12 14" stroke-width="2.200"/><path d="M11.500 13 l2.500 2.500 c-1 3.500 -5 4.500 -9.500 4 c3 -1 3.500 -4.500 7 -6.500 z" fill="#c6c6c6" stroke="none"/><path d="M5 9 a7 6 0 0 1 11 -4" stroke-width="1.300"/><path d="M3 7 l5 .5 l-3 3.500 z" fill="#c6c6c6" stroke="none"/><path d="M16 8 a7 7 0 0 1 1 9" stroke-dasharray="1 1.700" stroke-width="1.100"/></svg>
<svg style="left:28px;top:347px" width="4" height="4"><path d="M4 0 v4 h-4 z" fill="#d0d0d0"/></svg>
<svg style="left:7px;top:354px" width="24" height="24" viewBox="0 0 24 24" fill="none" stroke="#c6c6c6" stroke-width="1.3" stroke-linecap="round" stroke-linejoin="round"><path d="M9 7 h12 l-5 7 h-12 z" fill="#cfcfcf" stroke="none"/><path d="M4 14 h12 v4.500 h-12 z" fill="#a5a5a5" stroke="none"/><path d="M16 14 l5 -7 v4.500 l-5 7 z" fill="#8d8d8d" stroke="none"/></svg>
<svg style="left:28px;top:373px" width="4" height="4"><path d="M4 0 v4 h-4 z" fill="#d0d0d0"/></svg>
<svg style="left:7px;top:380px" width="24" height="24" viewBox="0 0 24 24" fill="none" stroke="#c6c6c6" stroke-width="1.3" stroke-linecap="round" stroke-linejoin="round"><path d="M5 11 l8 -5 l6 8 l-8 6 q-3 1 -5 -2 z" fill="#bdbdbd" stroke="#c6c6c6"/><path d="M8 12 c-1 -6 2 -9 4 -9 c2 0 3 3 2 7" stroke-width="1.400"/><path d="M19 13 c2 2 3 4 2 6 c-1 1 -2.500 0 -2 -2 z" fill="#c6c6c6" stroke="none"/></svg>
<svg style="left:28px;top:399px" width="4" height="4"><path d="M4 0 v4 h-4 z" fill="#d0d0d0"/></svg>
<svg style="left:7px;top:406px" width="24" height="24" viewBox="0 0 24 24" fill="none" stroke="#c6c6c6" stroke-width="1.3" stroke-linecap="round" stroke-linejoin="round"><path d="M12 3 c1 4 6 8 6 12 a6 6 0 0 1 -12 0 c0 -4 5 -8 6 -12 z" fill="#c6c6c6" stroke="none"/></svg>
<svg style="left:28px;top:425px" width="4" height="4"><path d="M4 0 v4 h-4 z" fill="#d0d0d0"/></svg>
<svg style="left:7px;top:432px" width="24" height="24" viewBox="0 0 24 24" fill="none" stroke="#c6c6c6" stroke-width="1.3" stroke-linecap="round" stroke-linejoin="round"><circle cx="9.500" cy="9" r="5.500" fill="#c6c6c6" stroke="none"/><path d="M13 13 L21 21" stroke-width="2.400"/></svg>
<svg style="left:28px;top:451px" width="4" height="4"><path d="M4 0 v4 h-4 z" fill="#d0d0d0"/></svg>
<div style="left:5px;top:459px;width:29px;height:1px;background:#3b3b3b"></div>
<div style="left:5px;top:460px;width:29px;height:1px;background:#5f5f5f"></div>
<svg style="left:7px;top:460.5px" width="24" height="24" viewBox="0 0 24 24" fill="none" stroke="#c6c6c6" stroke-width="1.3" stroke-linecap="round" stroke-linejoin="round"><path d="M3 20 l3 -10 l8 -5 l6 6 l-5 8 z" fill="#c6c6c6" stroke="none"/><path d="M15 3 l6.500 6.500" stroke-width="2.400"/><path d="M3.500 19.500 l6.500 -6.500" stroke="#535353" stroke-width="1.200"/><circle cx="11" cy="12" r="1.600" fill="#535353" stroke="none"/></svg>
<svg style="left:28px;top:479.5px" width="4" height="4"><path d="M4 0 v4 h-4 z" fill="#d0d0d0"/></svg>
<div class="t" style="left:10px;top:488.500px;width:18px;text-align:center;font-family:'Liberation Serif',serif;font-size:20.500px;font-weight:bold;color:#c6c6c6">T</div>
<svg style="left:28px;top:506px" width="4" height="4"><path d="M4 0 v4 h-4 z" fill="#d0d0d0"/></svg>
<svg style="left:7px;top:513px" width="24" height="24" viewBox="0 0 24 24" fill="none" stroke="#c6c6c6" stroke-width="1.3" stroke-linecap="round" stroke-linejoin="round"><path d="M8 3 v16 l4 -4 l3 6.500 l2.500 -1.200 l-3 -6.300 h5.500 z" fill="#c6c6c6" stroke="none"/></svg>
<svg style="left:28px;top:532px" width="4" height="4"><path d="M4 0 v4 h-4 z" fill="#d0d0d0"/></svg>
<svg style="left:7px;top:539px" width="24" height="24" viewBox="0 0 24 24" fill="none" stroke="#c6c6c6" stroke-width="1.3" stroke-linecap="round" stroke-linejoin="round"><rect x="5" y="6" width="14.500" height="12" rx="3.500" fill="#8e8e8e" stroke="#c4c4c4" stroke-width="1.200"/></svg>
<svg style="left:28px;top:558px" width="4" height="4"><path d="M4 0 v4 h-4 z" fill="#d0d0d0"/></svg>
<div style="left:5px;top:565px;width:29px;height:1px;background:#3b3b3b"></div>
<div style="left:5px;top:566px;width:29px;height:1px;background:#5f5f5f"></div>
<svg style="left:7px;top:568px" width="24" height="24" viewBox="0 0 24 24" fill="none" stroke="#c6c6c6" stroke-width="1.3" stroke-linecap="round" stroke-linejoin="round"><path d="M7.500 20.500 c-2 -2 -3 -4.500 -2.500 -7 l12 -1 c1 3 .5 6 -1 8 z" fill="#c6c6c6" stroke="none"/><path d="M8.500 13 L7.500 6.500 M11.500 12 L11.200 4.800 M14.500 12 L15.300 5.600 M17 13.500 L19 8.500 M6 15.500 L3.500 11.500" stroke-width="2.500"/></svg>
<svg style="left:28px;top:587px" width="4" height="4"><path d="M4 0 v4 h-4 z" fill="#d0d0d0"/></svg>
<svg style="left:7px;top:594px" width="24" height="24" viewBox="0 0 24 24" fill="none" stroke="#c6c6c6" stroke-width="1.3" stroke-linecap="round" stroke-linejoin="round"><circle cx="10" cy="9.500" r="4.800" fill="#8a8a8a" stroke="#c6c6c6" stroke-width="1.700"/><path d="M14 13.500 L20.500 20" stroke-width="2.800"/></svg>
<div style="left:8px;top:625px;width:7px;height:7px;background:#b0b0b0;border:1px solid #d8d8d8"></div>
<div style="left:4px;top:621px;width:8px;height:8px;background:#1a1a1a;border:1px solid #c8c8c8"></div>
<svg style="left:22px;top:620px" width="12" height="12" viewBox="0 0 12 12" fill="none" stroke="#c6c6c6" stroke-width="1.300"><path d="M2.500 3 h4 a3 3 0 0 1 3 3 v3.500"/><path d="M0 3 l3.500 -2.800 v5.600 z M9.500 12 l-2.800 -3.500 h5.600 z" fill="#c6c6c6" stroke="none"/></svg>
<div style="left:15px;top:648px;width:19px;height:19px;background:#fff;border:1px solid #3a3a3a"></div>
<div style="left:5px;top:638px;width:18.5px;height:18.5px;background:#2c4760;border:1px solid #f4f4f4;box-shadow:1px 1px 0 #2a2a2a"></div>
<div style="left:10px;top:675px;width:18px;height:14px;border:1px solid #d2d2d2;background:#4a4a4a"></div>
<svg style="left:14px;top:677px" width="10" height="10"><circle cx="5" cy="5" r="4" fill="none" stroke="#c6c6c6" stroke-width="1.100" stroke-dasharray="1 1.300"/></svg>
<div style="left:16px;top:702px;width:12px;height:9px;border:1px solid #d2d2d2;background:#7a7a7a"></div>
<div style="left:10px;top:705.5px;width:12px;height:9px;border:1px solid #d2d2d2;background:#535353"></div>
<svg style="left:28px;top:717px" width="4" height="4"><path d="M4 0 v4 h-4 z" fill="#d0d0d0"/></svg>
<div style="left:1077px;top:63px;width:289px;height:664px;background:#2d2d2d"></div>
<div style="left:1077px;top:63px;width:37px;height:12px;background:#3e3e3e;border-bottom:1px solid #2f2f2f"></div>
<div style="left:1117px;top:63px;width:249px;height:12px;background:#3e3e3e;border-bottom:1px solid #2f2f2f"></div>
<svg style="left:1103px;top:66px" width="8" height="6"><path d="M3.500 0 l-3.500 3 l3.500 3 z M7.500 0 l-3.500 3 l3.500 3 z" fill="#d8d8d8"/></svg>
<svg style="left:1354px;top:66px" width="8" height="6"><path d="M0 0 l3.500 3 l-3.500 3 z M4 0 l3.500 3 l-3.500 3 z" fill="#d8d8d8"/></svg>
<div style="left:1077px;top:75px;width:37px;height:652px;background:#535353"></div>
<div style="left:1086px;top:79px;width:19px;height:3px;background:repeating-linear-gradient(90deg,#2f2f2f 0 1px,transparent 1px 2px)"></div>
<div style="left:1086px;top:120px;width:19px;height:3px;background:repeating-linear-gradient(90deg,#2f2f2f 0 1px,transparent 1px 2px)"></div>
<div style="left:1086px;top:161px;width:19px;height:3px;background:repeating-linear-gradient(90deg,#2f2f2f 0 1px,transparent 1px 2px)"></div>
<div style="left:1086px;top:230px;width:19px;height:3px;background:repeating-linear-gradient(90deg,#2f2f2f 0 1px,transparent 1px 2px)"></div>
<div style="left:1086px;top:298px;width:19px;height:3px;background:repeating-linear-gradient(90deg,#2f2f2f 0 1px,transparent 1px 2px)"></div>
<div style="left:1077px;top:115px;width:37px;height:1px;background:#2f2f2f"></div>
<div style="left:1077px;top:116px;width:37px;height:1px;background:#606060"></div>
<div style="left:1077px;top:156px;width:37px;height:1px;background:#2f2f2f"></div>
<div style="left:1077px;top:157px;width:37px;height:1px;background:#606060"></div>
<div style="left:1077px;top:225px;width:37px;height:1px;background:#2f2f2f"></div>
<div style="left:1077px;top:226px;width:37px;height:1px;background:#606060"></div>
<div style="left:1077px;top:294px;width:37px;height:1px;background:#2f2f2f"></div>
<div style="left:1077px;top:295px;width:37px;height:1px;background:#606060"></div>
<div style="left:1077px;top:335px;width:37px;height:1px;background:#2f2f2f"></div>
<div style="left:1077px;top:336px;width:37px;height:1px;background:#606060"></div>
<svg style="left:1085px;top:87px" width="22" height="22" viewBox="0 0 22 22" fill="none" stroke="#c4c4c4" stroke-width="1.300"><rect x="4.500" y="3.500" width="4" height="4"/><rect x="4.500" y="9.500" width="4" height="4"/><rect x="4" y="15" width="5" height="4.500" fill="#c4c4c4" stroke="none"/><path d="M12.500 16 c4 -2 5 -7 2 -10.500" stroke-width="1.600"/><path d="M11 6.500 l5.500 -2.500 l-.5 5.500 z" fill="#c4c4c4" stroke="none"/></svg>
<svg style="left:1085px;top:127px" width="22" height="22" viewBox="0 0 22 22" fill="none" stroke="#c4c4c4" stroke-width="1.300"><path d="M3 7 l5 -2.500 l5 2.500 v6 l-5 2.500 l-5 -2.500 z M3 7 l5 2.500 l5 -2.500 M8 9.500 v6"/><rect x="15" y="4.500" width="4" height="3.500" fill="#c4c4c4" stroke="none"/><rect x="15" y="10" width="4" height="3.500" fill="#c4c4c4" stroke="none"/><rect x="3" y="17" width="16" height="3.500" fill="#c4c4c4" stroke="none"/><path d="M15 18 h3 l-1.500 2 z" fill="#333" stroke="none"/></svg>
<svg style="left:1085px;top:170px" width="22" height="22" viewBox="0 0 22 22" fill="none" stroke="#c4c4c4" stroke-width="1.300"><path d="M6.500 10 h9 v10 h-9 z" fill="#c4c4c4" stroke="none"/><path d="M8.500 9.500 L5.500 3.500 M11 9.500 V2.500 M13.500 9.500 L17 4" stroke-width="2.400" stroke-linecap="round"/></svg>
<svg style="left:1085px;top:197px" width="22" height="22" viewBox="0 0 22 22" fill="none" stroke="#c4c4c4" stroke-width="1.300"><path d="M3 6.500 h3 M11 6.500 h9" stroke-width="1.500"/><ellipse cx="8" cy="6.500" rx="3.500" ry="2.200" fill="#c4c4c4" stroke="none"/><path d="M3 14.500 h9" stroke-width="1.500"/><path d="M19 9.500 c1.500 3 1.500 7 0 10 c-3 -1 -6 -3 -7 -5 c1 -2 4 -4 7 -5 z" fill="#c4c4c4" stroke="none"/></svg>
<div class="t" style="left:1088.300px;top:241px;font-size:17px;color:#c4c4c4">A</div>
<div style="left:1100.5px;top:242.5px;width:1px;height:14px;background:#c4c4c4"></div>
<div class="t" style="left:1088.700px;top:268.500px;font-size:17.500px;color:#c4c4c4;font-weight:bold;transform:scaleX(1.3);transform-origin:0 0">&para;</div>
<svg style="left:1085px;top:307px" width="22" height="22" viewBox="0 0 22 22" fill="none" stroke="#c4c4c4" stroke-width="1.300"><path d="M2 7.500 h18 M2 14.500 h18 M7.500 2 v18 M14.500 2 v18" stroke-width="1"/><rect x="3" y="3" width="3" height="3" fill="#c4c4c4" stroke="none"/><rect x="9.500" y="3" width="3" height="3" fill="#c4c4c4" stroke="none"/><rect x="16" y="3" width="3" height="3" fill="#c4c4c4" stroke="none"/><rect x="3" y="9.500" width="3" height="3" fill="#c4c4c4" stroke="none"/><rect x="9.500" y="9.500" width="3" height="3" fill="#c4c4c4" stroke="none"/><rect x="16" y="9.500" width="3" height="3" fill="#c4c4c4" stroke="none"/><rect x="3" y="16" width="3" height="3" fill="#c4c4c4" stroke="none"/><rect x="9.500" y="16" width="3" height="3" fill="#c4c4c4" stroke="none"/><rect x="16" y="16" width="3" height="3" fill="#c4c4c4" stroke="none"/></svg>
<div style="left:1117px;top:75px;width:249px;height:17px;background:#434343;border-bottom:1px solid #2d2d2d"></div>
<div class="itab" style="left:1117px;top:75px;width:40px;height:17px;"></div>
<div class="t" style="left:1123.7px;top:80.3px;font-size:10px;font-weight:bold;color:#aaaaaa;transform:scaleX(0.9767);transform-origin:0 0;">Color</div>
<div class="itab" style="left:1157px;top:75px;width:60px;height:17px;"></div>
<div class="t" style="left:1165px;top:80.3px;font-size:10px;font-weight:bold;color:#aaaaaa;transform:scaleX(0.9451);transform-origin:0 0;">Swatches</div>
<div class="tab" style="left:1217px;top:75px;width:33px;height:18px;"></div>
<div style="left:1217px;top:75px;width:32px;height:1px;background:#676767"></div>
<div class="t" style="left:1223.6px;top:80.3px;font-size:10px;font-weight:bold;color:#f0f0f0;transform:scaleX(1.0696);transform-origin:0 0;">Info</div>
<svg style="left:1347px;top:81px" width="13" height="8"><path d="M0 1 h4.500 l-2.250 3 z" fill="#d8d8d8"/><path d="M5.500 .5 h7 M5.500 2.500 h7 M5.500 4.500 h7 M5.500 6.500 h7" stroke="#d8d8d8" stroke-width="1"/></svg>
<div style="left:1117px;top:93px;width:249px;height:223px;background:#535353"></div>
<div class="t" style="left:1152px;top:102.2px;font-size:10px;color:#f0f0f0">R</div>
<div class="t" style="left:1164.5px;top:101.7px;font-size:10px;color:#f0f0f0">:</div>
<div class="t" style="left:1159px;top:102.2px;width:60px;text-align:right;font-size:10px;color:#f0f0f0;letter-spacing:-0.3px">255</div>
<div class="t" style="left:1151px;top:113.2px;font-size:10px;color:#f0f0f0">G</div>
<div class="t" style="left:1163.5px;top:112.7px;font-size:10px;color:#f0f0f0">:</div>
<div class="t" style="left:1159px;top:113.2px;width:60px;text-align:right;font-size:10px;color:#f0f0f0;letter-spacing:-0.3px">229</div>
<div class="t" style="left:1152px;top:124.2px;font-size:10px;color:#f0f0f0">B</div>
<div class="t" style="left:1164.5px;top:123.7px;font-size:10px;color:#f0f0f0">:</div>
<div class="t" style="left:1159px;top:124.2px;width:60px;text-align:right;font-size:10px;color:#f0f0f0;letter-spacing:-0.3px">229</div>
<div class="t" style="left:1146px;top:145.8px;font-size:10px;color:#f0f0f0;transform:scaleX(1.0795);transform-origin:0 0;">8-bit</div>
<div class="t" style="left:1275px;top:102.2px;font-size:10px;color:#f0f0f0">C</div>
<div class="t" style="left:1287.5px;top:101.7px;font-size:10px;color:#f0f0f0">:</div>
<div class="t" style="left:1286px;top:102.2px;width:60px;text-align:right;font-size:10px;color:#f0f0f0;letter-spacing:-0.3px">0%</div>
<div class="t" style="left:1273px;top:113.2px;font-size:10px;color:#f0f0f0">M</div>
<div class="t" style="left:1285.5px;top:112.7px;font-size:10px;color:#f0f0f0">:</div>
<div class="t" style="left:1286px;top:113.2px;width:60px;text-align:right;font-size:10px;color:#f0f0f0;letter-spacing:-0.3px">12%</div>
<div class="t" style="left:1275px;top:124.2px;font-size:10px;color:#f0f0f0">Y</div>
<div class="t" style="left:1287.5px;top:123.7px;font-size:10px;color:#f0f0f0">:</div>
<div class="t" style="left:1286px;top:124.2px;width:60px;text-align:right;font-size:10px;color:#f0f0f0;letter-spacing:-0.3px">4%</div>
<div class="t" style="left:1275px;top:135.2px;font-size:10px;color:#f0f0f0">K</div>
<div class="t" style="left:1287.5px;top:134.7px;font-size:10px;color:#f0f0f0">:</div>
<div class="t" style="left:1286px;top:135.2px;width:60px;text-align:right;font-size:10px;color:#f0f0f0;letter-spacing:-0.3px">0%</div>
<div class="t" style="left:1269px;top:145.8px;font-size:10px;color:#f0f0f0;transform:scaleX(1.0795);transform-origin:0 0;">8-bit</div>
<div style="left:1240px;top:94px;width:1px;height:64px;background:#3e3e3e"></div>
<div style="left:1241px;top:94px;width:1px;height:64px;background:#5f5f5f"></div>
<div style="left:1118px;top:160px;width:248px;height:1px;background:#3e3e3e"></div>
<div style="left:1118px;top:161px;width:248px;height:1px;background:#5f5f5f"></div>
<div class="t" style="left:1152px;top:168.2px;font-size:10px;color:#f0f0f0">X</div>
<div class="t" style="left:1164.5px;top:167.7px;font-size:10px;color:#f0f0f0">:</div>
<div class="t" style="left:1159px;top:168.2px;width:60px;text-align:right;font-size:10px;color:#f0f0f0;letter-spacing:-0.3px">1046</div>
<div class="t" style="left:1152px;top:179.2px;font-size:10px;color:#f0f0f0">Y</div>
<div class="t" style="left:1164.5px;top:178.7px;font-size:10px;color:#f0f0f0">:</div>
<div class="t" style="left:1159px;top:179.2px;width:60px;text-align:right;font-size:10px;color:#f0f0f0;letter-spacing:-0.3px">951</div>
<div class="t" style="left:1273px;top:168.2px;font-size:10px;color:#f0f0f0">W</div>
<div class="t" style="left:1285.5px;top:167.7px;font-size:10px;color:#f0f0f0">:</div>
<div class="t" style="left:1274px;top:179.2px;font-size:10px;color:#f0f0f0">H</div>
<div class="t" style="left:1286.5px;top:178.7px;font-size:10px;color:#f0f0f0">:</div>
<div style="left:1240px;top:163px;width:1px;height:31px;background:#3e3e3e"></div>
<div style="left:1241px;top:163px;width:1px;height:31px;background:#5f5f5f"></div>
<div style="left:1118px;top:195px;width:248px;height:1px;background:#3e3e3e"></div>
<div style="left:1118px;top:196px;width:248px;height:1px;background:#5f5f5f"></div>
<div class="t" style="left:1128.3px;top:207.8px;font-size:10px;color:#f0f0f0;transform:scaleX(0.9693);transform-origin:0 0;">Doc: 10.0M/2.72M</div>
<div style="left:1118px;top:223px;width:248px;height:1px;background:#3e3e3e"></div>
<div style="left:1118px;top:224px;width:248px;height:1px;background:#5f5f5f"></div>
<div style="left:1128.7px;top:234.800px;width:260px;font-size:10px;line-height:12px;color:#f0f0f0;transform:scaleX(.99);transform-origin:0 0;white-space:nowrap">Click and drag to move layer or move a copy of<br>selection. Shift constrains to 45 degree<br>increments.</div>
<svg style="left:1125px;top:110px" width="16" height="16" viewBox="0 0 16 16" fill="none" stroke="#c4c4c4" stroke-width="1.100"><path d="M1 12 l1 -3 l5.500 -5.500 l2 2 l-5.500 5.500 z"/><path d="M6.500 2.500 l4 4" stroke-width="2"/><path d="M8 3 l2 -2.500 a1.600 1.600 0 0 1 2.500 2.500 l-2.500 2 z" fill="#c4c4c4" stroke="none"/><path d="M9.500 11.500 h5 l-2.500 3 z" fill="#c4c4c4" stroke="none"/></svg>
<svg style="left:1248px;top:110px" width="16" height="16" viewBox="0 0 16 16" fill="none" stroke="#c4c4c4" stroke-width="1.100"><path d="M1 12 l1 -3 l5.500 -5.500 l2 2 l-5.500 5.500 z"/><path d="M6.500 2.500 l4 4" stroke-width="2"/><path d="M8 3 l2 -2.500 a1.600 1.600 0 0 1 2.500 2.500 l-2.500 2 z" fill="#c4c4c4" stroke="none"/><path d="M9.500 11.500 h5 l-2.500 3 z" fill="#c4c4c4" stroke="none"/></svg>
<svg style="left:1124px;top:170px" width="16" height="16" viewBox="0 0 16 16" fill="none" stroke="#c4c4c4" stroke-width="1"><path d="M6.500 0 v13 M0 6.500 h13"/><path d="M10.500 11.500 h5 l-2.500 3 z" fill="#c4c4c4" stroke="none"/></svg>
<svg style="left:1247px;top:170px" width="16" height="16" viewBox="0 0 16 16" fill="none" stroke="#c4c4c4" stroke-width="1"><path d="M2.500 12 v-9 h10"/><path d="M12 .5 l3 2.500 l-3 2.500 z M0 11 l2.500 3.500 l2.500 -3.500 z" fill="#c4c4c4" stroke="none"/><path d="M5 14.500 h9.500 v-9" stroke-dasharray="1 1.500"/></svg>
<div style="left:1117px;top:319px;width:249px;height:17px;background:#434343;border-bottom:1px solid #2d2d2d"></div>
<div class="tab" style="left:1117px;top:319px;width:73px;height:18px;"></div>
<div style="left:1117px;top:319px;width:72px;height:1px;background:#676767"></div>
<div class="t" style="left:1124.3px;top:324.3px;font-size:10px;font-weight:bold;color:#f0f0f0;transform:scaleX(0.9577);transform-origin:0 0;">Adjustments</div>
<div class="itab" style="left:1190px;top:319px;width:42px;height:17px;"></div>
<div class="t" style="left:1197px;top:324.3px;font-size:10px;font-weight:bold;color:#aaaaaa;transform:scaleX(0.9334);transform-origin:0 0;">Styles</div>
<svg style="left:1347px;top:325px" width="13" height="8"><path d="M0 1 h4.500 l-2.250 3 z" fill="#d8d8d8"/><path d="M5.500 .5 h7 M5.500 2.500 h7 M5.500 4.500 h7 M5.500 6.500 h7" stroke="#d8d8d8" stroke-width="1"/></svg>
<div style="left:1117px;top:337px;width:249px;height:102px;background:#535353"></div>
<div class="t" style="left:1126px;top:343.8px;font-size:10px;font-weight:bold;color:#f4f4f4;transform:scaleX(1.051);transform-origin:0 0;">Add an adjustment</div>
<svg width="0" height="0" style="left:0;top:0"><defs><linearGradient id="gm"><stop offset="0" stop-color="#333"/><stop offset="1" stop-color="#c8c8c8"/></linearGradient><linearGradient id="gf" x1="0" y1="0" x2="1" y2="1"><stop offset="0" stop-color="#b4b4b4"/><stop offset="1" stop-color="#828282"/></linearGradient><linearGradient id="gv" x1="0" y1="0" x2="0" y2="1"><stop offset="0" stop-color="#c4c4c4"/><stop offset="1" stop-color="#7c7c7c"/></linearGradient></defs></svg>
<svg style="left:1162px;top:360.5px" width="18" height="15" viewBox="0 0 18 15" fill="none" stroke="#c9c9c9" stroke-width="1"><circle cx="9" cy="7.500" r="3.400" fill="#7a7a7a" stroke-width="1.200"/><path d="M9 4.100 a3.400 3.400 0 0 1 0 6.800 z" fill="#c9c9c9" stroke="none"/><path d="M9 -.5 v2.500 M9 13 v2.500 M1 7.500 h2.500 M14.500 7.500 h2.500 M3.200 1.700 l1.800 1.800 M13 11.500 l1.800 1.800 M14.800 1.700 l-1.800 1.800 M5 11.500 l-1.800 1.800" stroke-width="1.600"/></svg>
<svg style="left:1187px;top:360.5px" width="18" height="15" viewBox="0 0 18 15" fill="none" stroke="#c9c9c9" stroke-width="1"><path d="M0.500 12.500 v-5 l1 -2 l1 3 l1.500 -6 l1.500 5 l1.500 -7 l1.500 6 l1.500 -6 l1.500 6 l1.500 -5 l1.500 5 l1 -3 l1 3 v6 z" fill="url(#gv)" stroke="none"/><path d="M0.500 13.500 h17" stroke-width="1.200"/></svg>
<svg style="left:1211px;top:360.5px" width="18" height="15" viewBox="0 0 18 15" fill="none" stroke="#c9c9c9" stroke-width="1"><rect x="1.500" y="1.500" width="15" height="12" stroke="#c9c9c9" fill="url(#gf)"/><path d="M1.500 5.500 h15 M1.500 9.500 h15 M6.500 1.500 v12 M11.500 1.500 v12" stroke="#6c6c6c" stroke-width=".9"/><path d="M2 13 c7 0 6 -11 14 -11" stroke="#f4f4f4" stroke-width="1.300"/></svg>
<svg style="left:1235px;top:360.5px" width="18" height="15" viewBox="0 0 18 15" fill="none" stroke="#c9c9c9" stroke-width="1"><rect x="1.500" y="1.500" width="15" height="12" stroke="#c9c9c9" fill="url(#gf)"/><path d="M2 13 L16 2 V13 z" fill="#7a7a7a" stroke="none"/><path d="M3.500 5 h4 M5.500 3 v4 M10 10.500 h4.500" stroke="#2e2e2e" stroke-width="1.100"/></svg>
<svg style="left:1259px;top:360.5px" width="18" height="15" viewBox="0 0 18 15" fill="none" stroke="#c9c9c9" stroke-width="1"><path d="M1.500 1.500 h15 l-7.500 12.500 z" fill="url(#gv)" stroke="#c9c9c9"/><circle cx="9" cy="5" r="2.500" fill="#777" stroke="none" opacity=".6"/></svg>
<svg style="left:1151px;top:387.5px" width="18" height="15" viewBox="0 0 18 15" fill="none" stroke="#c9c9c9" stroke-width="1"><rect x="1.500" y="1.500" width="15" height="12" stroke="#c9c9c9" fill="url(#gf)"/><rect x="2" y="2" width="14" height="5" fill="#c0c0c0" stroke="none"/><path d="M4.500 2 v5 M8 2 v5 M11.500 2 v5 M14.500 2 v5" stroke="#6a6a6a" stroke-width="1.600"/><rect x="2" y="8" width="14" height="5" fill="url(#gm)" stroke="none"/></svg>
<svg style="left:1175px;top:387.5px" width="18" height="15" viewBox="0 0 18 15" fill="none" stroke="#c9c9c9" stroke-width="1"><path d="M9 1 v3 M3.500 4.500 h11" stroke-width="1.400"/><path d="M7 0 h4 v2 l-2 2 l-2 -2 z" fill="#c9c9c9" stroke="none"/><path d="M3.500 4.500 l-3 6 M3.500 4.500 l3 6 M14.500 4.500 l-3 6 M14.500 4.500 l3 6" stroke-width=".9"/><path d="M0.300 10.500 h6.400 a3.200 2.800 0 0 1 -6.400 0 z M11.300 10.500 h6.400 a3.200 2.800 0 0 1 -6.400 0 z" fill="#c9c9c9" stroke="none"/></svg>
<svg style="left:1199px;top:387.5px" width="18" height="15" viewBox="0 0 18 15" fill="none" stroke="#c9c9c9" stroke-width="1"><rect x="1.500" y="1.500" width="15" height="12" stroke="#c9c9c9" fill="url(#gf)"/><rect x="9" y="2" width="7" height="11" fill="url(#gv)" stroke="none"/><rect x="2.500" y="2.500" width="6.500" height="10" fill="#555" stroke="#c9c9c9" stroke-width="1"/></svg>
<svg style="left:1223px;top:387.5px" width="18" height="15" viewBox="0 0 18 15" fill="none" stroke="#c9c9c9" stroke-width="1"><rect x="1" y="2.500" width="12" height="6.500" fill="#aaa" stroke="#c9c9c9"/><rect x="2.500" y=".8" width="5" height="1.700" fill="#c9c9c9" stroke="none"/><circle cx="7.500" cy="6" r="2" fill="#666" stroke="#555" stroke-width="1"/><circle cx="12" cy="10" r="4.200" fill="#8a8a8a" fill-opacity=".85" stroke="#c9c9c9" stroke-width="1.100"/></svg>
<svg style="left:1247px;top:387.5px" width="18" height="15" viewBox="0 0 18 15" fill="none" stroke="#c9c9c9" stroke-width="1"><circle cx="9" cy="4.800" r="4" fill="#b8b8b8" stroke="none"/><circle cx="5.300" cy="10" r="4" fill="#a2a2a2" stroke="none"/><circle cx="12.700" cy="10" r="4" fill="#adadad" stroke="none"/><path d="M6.500 6.500 h5 l-2.500 4 z" fill="#555" stroke="none"/><path d="M9 10 v3.500" stroke="#666" stroke-width="1.200"/></svg>
<svg style="left:1271px;top:387.5px" width="18" height="15" viewBox="0 0 18 15" fill="none" stroke="#c9c9c9" stroke-width="1"><rect x="1.500" y="1.500" width="15" height="12" stroke="#c9c9c9" fill="#6e6e6e"/><rect x="2" y="2" width="4.500" height="3.500" fill="#9c9c9c" stroke="none"/><rect x="7" y="2" width="4.500" height="3.500" fill="#888" stroke="none"/><rect x="2" y="6" width="4.500" height="3.500" fill="#888" stroke="none"/><rect x="2" y="10" width="14" height="3" fill="#484848" stroke="none"/><rect x="12" y="6" width="4" height="3.500" fill="#505050" stroke="none"/><path d="M1.500 5.500 h15 M1.500 9.500 h15 M6.500 1.500 v12 M11.500 1.500 v12" stroke="#c9c9c9" stroke-width="1"/></svg>
<svg style="left:1163px;top:414.5px" width="18" height="15" viewBox="0 0 18 15" fill="none" stroke="#c9c9c9" stroke-width="1"><rect x="1.500" y="1.500" width="15" height="12" stroke="#c9c9c9" fill="url(#gf)"/><path d="M2 13 L16 2" stroke="#c9c9c9" stroke-width="1"/><ellipse cx="9" cy="7.500" rx="4.200" ry="2.800" fill="#555" stroke="none" transform="rotate(-38 9 7.500)"/></svg>
<svg style="left:1187px;top:414.5px" width="18" height="15" viewBox="0 0 18 15" fill="none" stroke="#c9c9c9" stroke-width="1"><rect x="1.500" y="1.500" width="15" height="12" stroke="#c9c9c9" fill="url(#gf)"/><path d="M2 10 L10 2 h4 L2 13 z M8 13 L16 5 v4 l-4 4 z" fill="#6a6a6a" stroke="none"/></svg>
<svg style="left:1211px;top:414.5px" width="18" height="15" viewBox="0 0 18 15" fill="none" stroke="#c9c9c9" stroke-width="1"><rect x="1.500" y="1.500" width="15" height="12" stroke="#c9c9c9" fill="url(#gf)"/><path d="M2 11.500 h2.500 v-2 h3.500 v-2.500 h3.500 v-2.500 h4.500 v2.500 h-3 v2.500 h-3.500 v2.500 h-4 v1.500 h-3.500 z" fill="#3a3a3a" stroke="none"/></svg>
<svg style="left:1235px;top:414.5px" width="18" height="15" viewBox="0 0 18 15" fill="none" stroke="#c9c9c9" stroke-width="1"><rect x="1.500" y="1.500" width="15" height="12" stroke="#c9c9c9" fill="url(#gf)"/><path d="M2 2 L9 7.500 L2 13 z M16 2 L9 7.500 L16 13 z" fill="#6e6e6e" stroke="none"/><path d="M2 2 L16 13 M16 2 L2 13" stroke="#c9c9c9" stroke-width="1"/></svg>
<svg style="left:1259px;top:414.5px" width="18" height="15" viewBox="0 0 18 15" fill="none" stroke="#c9c9c9" stroke-width="1"><rect x="1.500" y="1.500" width="15" height="12" fill="url(#gm)" stroke="#c9c9c9"/></svg>
<div style="left:1117px;top:442px;width:249px;height:17px;background:#434343;border-bottom:1px solid #2d2d2d"></div>
<div class="tab" style="left:1117px;top:442px;width:44px;height:18px;"></div>
<div style="left:1117px;top:442px;width:43px;height:1px;background:#676767"></div>
<div class="t" style="left:1124.3px;top:447.3px;font-size:10px;font-weight:bold;color:#f0f0f0;transform:scaleX(0.8683);transform-origin:0 0;">Layers</div>
<div class="itab" style="left:1161px;top:442px;width:56px;height:17px;"></div>
<div class="t" style="left:1166.8px;top:447.3px;font-size:10px;font-weight:bold;color:#aaaaaa;transform:scaleX(0.9287);transform-origin:0 0;">Channels</div>
<div class="itab" style="left:1217px;top:442px;width:41px;height:17px;"></div>
<div class="t" style="left:1224px;top:447.3px;font-size:10px;font-weight:bold;color:#aaaaaa;transform:scaleX(0.9327);transform-origin:0 0;">Paths</div>
<svg style="left:1347px;top:448px" width="13" height="8"><path d="M0 1 h4.500 l-2.250 3 z" fill="#d8d8d8"/><path d="M5.500 .5 h7 M5.500 2.500 h7 M5.500 4.500 h7 M5.500 6.500 h7" stroke="#d8d8d8" stroke-width="1"/></svg>
<div style="left:1117px;top:460px;width:249px;height:267px;background:#535353"></div>
<div class="dd" style="left:1121px;top:463px;width:70px;height:20px;"></div>
<svg style="left:1126px;top:467px" width="12" height="12" viewBox="0 0 12 12" fill="none" stroke="#e0e0e0" stroke-width="1.400"><circle cx="7" cy="4.500" r="3"/><path d="M5 7 L1 11" stroke-width="1.800"/></svg>
<div class="t" style="left:1143px;top:468.8px;font-size:10px;color:#f0f0f0;transform:scaleX(0.9693);transform-origin:0 0;">Kind</div>
<svg style="left:1181px;top:468px" width="6" height="11"><path d="M0 3.700 l3 -3.700 l3 3.700 z M0 6.300 l3 3.700 l3 -3.700 z" fill="#ececec"/></svg>
<svg style="left:1203px;top:466px" width="14" height="12" viewBox="0 0 14 12" fill="none" stroke="#cfcfcf"><rect x=".5" y=".5" width="13" height="11"/><path d="M2 9.500 l3.500 -4 l2.500 3 l1.500 -1.500 l2.500 2.500 z" fill="#cfcfcf" stroke="none"/><circle cx="10" cy="3.500" r="1" fill="#cfcfcf" stroke="none"/></svg>
<svg style="left:1227px;top:466px" width="12" height="12" viewBox="0 0 12 12"><circle cx="6" cy="6" r="5" fill="#8a8a8a" stroke="#cfcfcf"/><path d="M2.500 9.500 a5 5 0 0 1 7 -7 z" fill="#cfcfcf"/></svg>
<div class="t" style="left:1252px;top:465px;font-family:'Liberation Serif',serif;font-size:14.500px;font-weight:bold;color:#cfcfcf">T</div>
<svg style="left:1275px;top:466px" width="12" height="12" viewBox="0 0 12 12" fill="none" stroke="#cfcfcf"><rect x="1.500" y="1.500" width="9" height="9"/><rect x="0" y="0" width="3" height="3" fill="#535353"/><rect x="9" y="0" width="3" height="3" fill="#535353"/><rect x="0" y="9" width="3" height="3" fill="#535353"/><rect x="9" y="9" width="3" height="3" fill="#535353"/></svg>
<svg style="left:1299px;top:465px" width="13" height="14" viewBox="0 0 13 14" fill="none" stroke="#cfcfcf"><path d="M4.500 .5 h5 l3 3 v9 h-8 z M9.500 .5 v3 h3"/><rect x="0" y="7" width="7" height="7" fill="#9a9a9a" stroke="none"/></svg>
<div style="left:1325px;top:464.5px;width:9.5px;height:16.5px;background:linear-gradient(#8a8a8a 0 45%,#2f2f2f 45%);border:1px solid #2f2f2f;border-radius:1px"></div>
<div style="left:1118px;top:486px;width:248px;height:1px;background:#3e3e3e"></div>
<div style="left:1118px;top:487px;width:248px;height:1px;background:#5f5f5f"></div>
<div class="dd" style="left:1121px;top:491px;width:111px;height:20px;"></div>
<div class="t" style="left:1129.2px;top:497.3px;font-size:10px;color:#f0f0f0;transform:scaleX(0.9619);transform-origin:0 0;">Normal</div>
<svg style="left:1221px;top:496px" width="6" height="11"><path d="M0 3.700 l3 -3.700 l3 3.700 z M0 6.300 l3 3.700 l3 -3.700 z" fill="#ececec"/></svg>
<div class="t" style="left:1238.8px;top:495.8px;font-size:10px;color:#f0f0f0;transform:scaleX(0.9815);transform-origin:0 0;">Opacity:</div>
<div style="left:1281px;top:491px;width:54px;height:19px;background:linear-gradient(#6a6a6a,#555);border:1px solid #2c2c2c;border-radius:3px"></div>
<div style="left:1282px;top:492px;width:34px;height:17px;background:#3a3a3a;border-right:1px solid #2c2c2c;border-radius:2px 0 0 2px"></div>
<div class="t" style="left:1286px;top:497.3px;font-size:10px;color:#f0f0f0;transform:scaleX(0.9657);transform-origin:0 0;">100%</div>
<svg style="left:1322.500px;top:499.5px" width="6" height="3.500"><path d="M0 0 h6 l-3 3.500 z" fill="#f0f0f0"/></svg>
<div style="left:1118px;top:515px;width:248px;height:1px;background:#3e3e3e"></div>
<div style="left:1118px;top:516px;width:248px;height:1px;background:#5f5f5f"></div>
<div class="t" style="left:1123.2px;top:525.5999999999999px;font-size:10px;color:#f0f0f0;transform:scaleX(0.9623);transform-origin:0 0;">Lock:</div>
<svg style="left:1156px;top:523px" width="11" height="11" viewBox="0 0 11 11"><rect width="11" height="11" fill="#8a8a8a"/><path d="M0 0 h3.700 v3.700 h-3.700 z M7.300 0 h3.700 v3.700 h-3.700 z M3.700 3.700 h3.600 v3.600 h-3.600 z M0 7.300 h3.700 v3.700 h-3.700 z M7.300 7.300 h3.700 v3.700 h-3.700 z" fill="#6a6a6a"/></svg>
<svg style="left:1176px;top:521px" width="17" height="14" viewBox="0 0 17 14"><path d="M16 1 L8 9" stroke="#8a8a8a" stroke-width="2"/><path d="M7.500 8 l2 2 c-1 3 -4.500 3.500 -9 3.500 c3 -1 3.500 -4 7 -5.500 z" fill="#8a8a8a"/></svg>
<svg style="left:1199px;top:521px" width="14" height="14" viewBox="0 0 14 14" fill="none" stroke="#cfcfcf" stroke-width="1.100"><path d="M7 1.500 v11 M1.500 7 h11"/><path d="M7 0 l-2.300 2.800 h4.600 z M7 14 l-2.300 -2.800 h4.600 z M0 7 l2.800 -2.300 v4.600 z M14 7 l-2.800 -2.300 v4.600 z" fill="#cfcfcf" stroke="none"/></svg>
<svg style="left:1222px;top:521px" width="11" height="14" viewBox="0 0 11 14"><path d="M2.500 6 v-2 a3 3 0 0 1 6 0 v2" fill="none" stroke="#cfcfcf" stroke-width="1.600"/><rect x=".5" y="6" width="10" height="7.500" rx="1" fill="#cfcfcf"/><rect x="4.500" y="8" width="2" height="3" fill="#535353"/></svg>
<div class="t" style="left:1260.8px;top:523.8px;font-size:10px;color:#f0f0f0;transform:scaleX(0.9195);transform-origin:0 0;">Fill:</div>
<div style="left:1281px;top:519px;width:54px;height:19px;background:linear-gradient(#6a6a6a,#555);border:1px solid #2c2c2c;border-radius:3px"></div>
<div style="left:1282px;top:520px;width:34px;height:17px;background:#3a3a3a;border-right:1px solid #2c2c2c;border-radius:2px 0 0 2px"></div>
<div class="t" style="left:1286px;top:525.3px;font-size:10px;color:#f0f0f0;transform:scaleX(0.9657);transform-origin:0 0;">100%</div>
<svg style="left:1322.500px;top:527.5px" width="6" height="3.500"><path d="M0 0 h6 l-3 3.500 z" fill="#f0f0f0"/></svg>
<div style="left:1117px;top:541px;width:249px;height:167px;background:#3a3a3a"></div>
<div style="left:1118px;top:544px;width:29px;height:39px;background:#535353"></div>
<div style="left:1148px;top:544px;width:202px;height:39px;background:#596577"></div>
<svg style="left:1126px;top:559px" width="13" height="9" viewBox="0 0 13 9"><path d="M.5 4.500 c3 -5 9 -5 12 0 c-3 5 -9 5 -12 0 z" fill="#c2c2c2"/><circle cx="6.500" cy="4.500" r="2.600" fill="#4a4a4a"/><circle cx="6.500" cy="4.500" r="1.200" fill="#c2c2c2"/></svg>
<div class="t" style="left:1158px;top:553.5px;width:17px;text-align:center;font-family:'Liberation Serif',serif;font-size:21px;font-weight:bold;color:#cdcdcd;text-shadow:0 1px 0 rgba(0,0,0,.3)">T</div>
<div class="t" style="left:1193.2px;top:562.0999999999999px;font-size:10px;color:#f4f4f4;transform:scaleX(1.001);transform-origin:0 0;">This is Photoshop's version&nbsp; o...</div>
<div style="left:1118px;top:584px;width:29px;height:38px;background:#535353"></div>
<div style="left:1148px;top:584px;width:202px;height:38px;background:#596577"></div>
<svg style="left:1126px;top:599px" width="13" height="9" viewBox="0 0 13 9"><path d="M.5 4.500 c3 -5 9 -5 12 0 c-3 5 -9 5 -12 0 z" fill="#c2c2c2"/><circle cx="6.500" cy="4.500" r="2.600" fill="#4a4a4a"/><circle cx="6.500" cy="4.500" r="1.200" fill="#c2c2c2"/></svg>
<div class="t" style="left:1158px;top:593.5px;width:17px;text-align:center;font-family:'Liberation Serif',serif;font-size:21px;font-weight:bold;color:#cdcdcd;text-shadow:0 1px 0 rgba(0,0,0,.3)">T</div>
<div class="t" style="left:1193.2px;top:601.3px;font-size:10px;color:#f4f4f4;transform:scaleX(0.9949);transform-origin:0 0;">Planning copy</div>
<div style="left:1118px;top:623px;width:29px;height:38px;background:#535353"></div>
<div style="left:1148px;top:623px;width:202px;height:38px;background:#535353"></div>
<svg style="left:1126px;top:638px" width="13" height="9" viewBox="0 0 13 9"><path d="M.5 4.500 c3 -5 9 -5 12 0 c-3 5 -9 5 -12 0 z" fill="#c2c2c2"/><circle cx="6.500" cy="4.500" r="2.600" fill="#4a4a4a"/><circle cx="6.500" cy="4.500" r="1.200" fill="#c2c2c2"/></svg>
<div class="t" style="left:1158px;top:632.5px;width:17px;text-align:center;font-family:'Liberation Serif',serif;font-size:21px;font-weight:bold;color:#cdcdcd;text-shadow:0 1px 0 rgba(0,0,0,.3)">T</div>
<div class="t" style="left:1193.2px;top:640.3px;font-size:10px;color:#f4f4f4;transform:scaleX(1.001);transform-origin:0 0;">This is Photoshop's version&nbsp; o...</div>
<div style="left:1118px;top:662px;width:29px;height:38px;background:#535353"></div>
<div style="left:1148px;top:662px;width:202px;height:38px;background:#535353"></div>
<svg style="left:1126px;top:677px" width="13" height="9" viewBox="0 0 13 9"><path d="M.5 4.500 c3 -5 9 -5 12 0 c-3 5 -9 5 -12 0 z" fill="#c2c2c2"/><circle cx="6.500" cy="4.500" r="2.600" fill="#4a4a4a"/><circle cx="6.500" cy="4.500" r="1.200" fill="#c2c2c2"/></svg>
<div class="t" style="left:1158px;top:671.5px;width:17px;text-align:center;font-family:'Liberation Serif',serif;font-size:21px;font-weight:bold;color:#cdcdcd;text-shadow:0 1px 0 rgba(0,0,0,.3)">T</div>
<div class="t" style="left:1193.2px;top:679.3px;font-size:10px;color:#f4f4f4;transform:scaleX(0.984);transform-origin:0 0;">Planning</div>
<div style="left:1118px;top:701px;width:29px;height:7px;background:#535353"></div>
<div style="left:1148px;top:701px;width:202px;height:7px;background:#535353"></div>
<div style="left:1350px;top:541px;width:16px;height:167px;background:#404040;border-left:2px solid #333;border-right:1px solid #333"></div>
<svg style="left:1355px;top:550.500px" width="6" height="4"><path d="M0 4 l3 -4 l3 4 z" fill="#e6e6e6"/></svg>
<svg style="left:1355px;top:697.500px" width="6" height="4"><path d="M0 0 l3 4 l3 -4 z" fill="#e6e6e6"/></svg>
<div style="left:1355px;top:571px;width:9px;height:32px;background:linear-gradient(90deg,#8a8a8a,#6e6e6e);border-radius:3px"></div>
<div style="left:1116px;top:540px;width:239px;height:89px;border:3px solid #f51822"></div>
<div style="left:1117px;top:708px;width:249px;height:19px;background:#535353;border-top:1px solid #3a3a3a"></div>
<svg style="left:1161px;top:713px" width="15" height="10" viewBox="0 0 15 10" fill="none" stroke="#cfcfcf" stroke-width="1.700" stroke-linecap="round"><path d="M6 1.500 h-1.500 a3.500 3.500 0 0 0 0 7 h1.500 M9 1.500 h1.500 a3.500 3.500 0 0 1 0 7 h-1.500 M4.500 5 h6"/></svg>
<div class="t" style="left:1191px;top:711.500px;font-style:italic;font-weight:bold;font-size:13px;color:#8c8c8c;letter-spacing:-0.5px">fx</div>
<svg style="left:1204px;top:722px" width="4" height="3"><path d="M0 0 h4 l-2 2.500 z" fill="#8c8c8c"/></svg>
<svg style="left:1257px;top:722px" width="4" height="3"><path d="M0 0 h4 l-2 2.500 z" fill="#e0e0e0"/></svg>
<div style="left:1217px;top:712px;width:13px;height:12px;background:#8c8c8c"></div>
<svg style="left:1220px;top:715px" width="7" height="7"><circle cx="3.500" cy="3.500" r="3" fill="#535353"/></svg>
<svg style="left:1244px;top:712px" width="12" height="12" viewBox="0 0 12 12"><circle cx="6" cy="6" r="5" fill="#8a8a8a" stroke="#cfcfcf"/><path d="M2.500 9.500 a5 5 0 0 1 7 -7 z" fill="#cfcfcf"/></svg>
<svg style="left:1271px;top:712px" width="13" height="11" viewBox="0 0 13 11"><path d="M0 1 h5 l1.500 2 h6.500 v8 h-13 z" fill="#cfcfcf"/></svg>
<svg style="left:1298px;top:712px" width="12" height="12" viewBox="0 0 12 12"><path d="M1 1 h10 v10 h-6 l-4 -4 z" fill="#cfcfcf"/><path d="M1 7 h4 v4 z" fill="#535353"/></svg>
<svg style="left:1324px;top:711px" width="12" height="13" viewBox="0 0 12 13" fill="none" stroke="#cfcfcf" stroke-width="1.200"><path d="M0 3 h12 M4 3 v-2 h4 v2 M1.500 3 l1 9.500 h7 l1 -9.500 M4.500 5 v6 M6 5 v6 M7.500 5 v6"/></svg>
<div style="left:41px;top:690px;width:1017px;height:16px;background:#535353"></div>
<div style="left:41px;top:690px;width:48px;height:16px;background:#3b3b3b"></div>
<div class="t" style="left:51.2px;top:694.2px;font-size:10px;color:#f0f0f0;transform:scaleX(0.9699);transform-origin:0 0;">72.6%</div>
<div style="left:88px;top:690px;width:1px;height:16px;background:#2d2d2d"></div>
<div style="left:112px;top:690px;width:1px;height:16px;background:#2d2d2d"></div>
<svg style="left:95px;top:692.500px" width="12" height="12" viewBox="0 0 12 12"><circle cx="6" cy="6" r="5.800" fill="#e2e2e2"/><path d="M3.500 3 h3.500 l2 2 v2.500 h-3 v2 h-2.500 z" fill="#4a4a4a"/><path d="M7 3 l2 2 h-2 z" fill="#9a9a9a"/></svg>
<div class="t" style="left:158px;top:694.2px;font-size:10px;color:#f0f0f0;transform:scaleX(0.973);transform-origin:0 0;">Doc: 10.0M/2.72M</div>
<div style="left:284px;top:690px;width:13px;height:16px;background:#474747;border-left:1px solid #3a3a3a"></div>
<svg style="left:287px;top:693px" width="8" height="10"><path d="M0 0 l7 5 l-7 5 z" fill="#f0f0f0"/></svg>
<div style="left:297px;top:690px;width:761px;height:16px;background:linear-gradient(#2e2e2e,#3a3a3a 50%,#333)"></div>
<svg style="left:301.500px;top:694.500px" width="4" height="6"><path d="M4 0 l-4 3 l4 3 z" fill="#e6e6e6"/></svg>
<svg style="left:1048.500px;top:694.500px" width="4" height="6"><path d="M0 0 l4 3 l-4 3 z" fill="#e6e6e6"/></svg>
<div style="left:547px;top:692px;width:254px;height:12px;background:linear-gradient(#858585,#6a6a6a 60%,#5c5c5c);border-radius:3px;border:1px solid #4a4a4a"></div>
<div style="left:1058px;top:690px;width:16px;height:16px;background:#525252"></div>
<div style="left:41px;top:706px;width:1034px;height:2px;background:#2b2b2b"></div>
<div style="left:41px;top:708px;width:1034px;height:19px;background:#383838;border-top:1px solid #464646"></div>
<div style="left:41px;top:725px;width:1034px;height:1px;background:#2a2a2a"></div>
<div style="left:41px;top:726px;width:1034px;height:1px;background:#4c4c4c"></div>
<div class="tab" style="left:41px;top:708px;width:71px;height:19px;"></div>
<div style="left:41px;top:708px;width:70px;height:1px;background:#6a6a6a"></div>
<div class="t" style="left:48.2px;top:714.5px;font-size:10px;font-weight:bold;color:#f0f0f0;transform:scaleX(1.0194);transform-origin:0 0;">Mini Bridge</div>
<div class="itab" style="left:112px;top:709px;width:55px;height:16px;"></div>
<div class="t" style="left:118px;top:714.5px;font-size:10px;font-weight:bold;color:#9a9a9a;transform:scaleX(1.0078);transform-origin:0 0;">Timeline</div>
<svg style="left:1055.500px;top:713px" width="15" height="9"><path d="M0 2 h5.400 l-2.700 3.600 z" fill="#d8d8d8"/><path d="M6.500 .5 h8 M6.500 2.800 h8 M6.500 5.100 h8 M6.500 7.400 h8" stroke="#e0e0e0" stroke-width="1.100"/></svg>
<div style="left:0px;top:727px;width:1366px;height:2px;background:#1c2026"></div>
<div style="left:0px;top:729px;width:1366px;height:7px;background:linear-gradient(#75838f 0 1px,#3a4c60 1px,#283a4e 3px,#1e2e40 6px,#1a2838)"></div>
<div style="left:122px;top:730px;width:53px;height:9px;background:linear-gradient(90deg,rgba(150,160,170,.75),rgba(185,192,200,.8));border:1px solid rgba(225,232,240,.75);border-bottom:none;border-radius:3px 3px 0 0"></div>
<div style="left:180px;top:730px;width:2px;height:6px;background:#101822"></div>
<div style="left:184px;top:730px;width:58px;height:9px;background:linear-gradient(90deg,rgba(150,160,170,.75),rgba(185,192,200,.8));border:1px solid rgba(225,232,240,.75);border-bottom:none;border-radius:3px 3px 0 0"></div>
<div style="left:246px;top:730px;width:58px;height:9px;background:linear-gradient(90deg,#ecec9a 0 38%,rgba(160,170,180,.8) 38%);border:1px solid rgba(225,232,240,.75);border-bottom:none;border-radius:3px 3px 0 0"></div>
<div style="left:432px;top:730px;width:58px;height:9px;background:linear-gradient(90deg,rgba(150,160,170,.75),rgba(185,192,200,.8));border:1px solid rgba(225,232,240,.75);border-bottom:none;border-radius:3px 3px 0 0"></div>
<div style="left:494px;top:730px;width:58px;height:9px;background:rgba(225,230,236,.9);border:1px solid rgba(225,232,240,.75);border-bottom:none;border-radius:3px 3px 0 0"></div>
<div style="left:556px;top:730px;width:58px;height:9px;background:linear-gradient(90deg,rgba(150,160,170,.75),rgba(185,192,200,.8));border:1px solid rgba(225,232,240,.75);border-bottom:none;border-radius:3px 3px 0 0"></div>
<div style="left:618px;top:730px;width:58px;height:9px;background:linear-gradient(90deg,rgba(150,160,170,.75),rgba(185,192,200,.8));border:1px solid rgba(225,232,240,.75);border-bottom:none;border-radius:3px 3px 0 0"></div>
<svg style="left:12px;top:729px" width="30" height="8"><ellipse cx="15" cy="16" rx="14.500" ry="14" fill="#7fa6cc" stroke="#e4f0fc" stroke-width="1.200"/></svg>
<svg style="left:90px;top:729px" width="20" height="8"><path d="M2 8 c2 -5 8 -6 12 -4" fill="none" stroke="#e8b830" stroke-width="1.500"/></svg>
<div style="left:134px;top:734px;width:14px;height:2px;background:#d8b060"></div>
<svg style="left:202px;top:729px" width="22" height="8"><ellipse cx="11" cy="12" rx="9" ry="8" fill="#e0392f"/></svg>
<div style="left:320px;top:733px;width:18px;height:3px;background:#9a9a9a;border-top:1px solid #ddd"></div>
<svg style="left:388px;top:729px" width="22" height="8"><ellipse cx="11" cy="12" rx="9" ry="8" fill="#2fa0e8"/></svg>
<svg style="left:455px;top:729px" width="16" height="8"><path d="M4 8 c6 -1 8 -4 7 -6 c4 2 4 5 2 6 z" fill="#f0a030"/></svg>
<div style="left:510px;top:732px;width:27px;height:4px;background:#1a3fb0;border-top:1px solid #7fb0ff"></div>
<svg style="left:575px;top:729px" width="22" height="8"><path d="M0 8 L20 2 V8 z" fill="#2a5cc0"/></svg>
<svg style="left:637px;top:729px" width="22" height="8"><ellipse cx="11" cy="12" rx="9" ry="8" fill="#f4f4f4" stroke="#e0392f" stroke-width="2"/></svg>
<div style="left:1352px;top:730px;width:14px;height:6px;background:rgba(160,175,190,.5);border-left:1px solid rgba(255,255,255,.5);border-top:1px solid rgba(255,255,255,.4)"></div>
</body></html>
